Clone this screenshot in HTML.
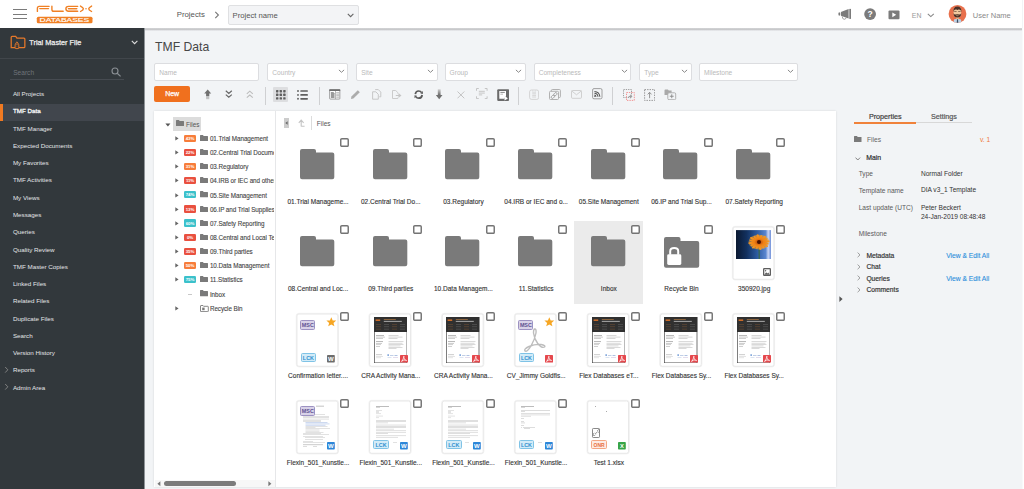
<!DOCTYPE html><html><head><meta charset="utf-8"><style>
*{margin:0;padding:0;box-sizing:border-box}
html,body{width:1024px;height:489px;overflow:hidden;background:#f2f4f6;font-family:"Liberation Sans",sans-serif}
.t{position:absolute;white-space:nowrap;line-height:1}
.r{position:absolute;display:block}
</style></head><body><div class="r" style="left:0.00px;top:0.00px;width:1024.00px;height:489.00px;background:#f2f4f6;"></div>
<div class="r" style="left:0.00px;top:0.00px;width:1022.00px;height:28.00px;background:#ffffff;z-index:2"></div>
<div class="r" style="left:0.00px;top:27.60px;width:1022.00px;height:3.60px;background:linear-gradient(#d6d7d9 0%, #c4c5c7 45%, #dcdde0 75%, #f2f4f6 100%);z-index:2"></div>
<div class="r" style="left:1022.00px;top:28.00px;width:1.00px;height:461.00px;background:#f8f9fa;z-index:3"></div>
<div class="r" style="left:1023.00px;top:0.00px;width:1.00px;height:489.00px;background:#ffffff;z-index:3"></div>
<div class="r" style="left:13.20px;top:9.00px;width:13.40px;height:1.10px;background:#7b7b7b;z-index:4"></div>
<div class="r" style="left:13.20px;top:13.50px;width:13.40px;height:1.10px;background:#7b7b7b;z-index:4"></div>
<div class="r" style="left:13.20px;top:18.00px;width:13.40px;height:1.10px;background:#7b7b7b;z-index:4"></div>
<svg class="r" style="left:0.00px;top:0.00px;z-index:4" width="100" height="28" viewBox="0 0 100 28">
<g fill="none" stroke="#f08024" stroke-width="1.4" stroke-linecap="round" stroke-linejoin="round">
<path d="M49.1 6.35 H39.2 Q37.4 6.35 37.4 8.15 V11.4"/>
<path d="M39.8 8.6 H48.5"/>
<path d="M51.9 6.2 V9.4 Q51.9 11.25 53.7 11.25 H63.2"/>
<path d="M77.7 6.35 H68.5 Q65.9 6.35 65.9 8.8 Q65.9 11.25 68.5 11.25 H77.7"/>
<path d="M68.4 8.65 H76.8"/>
<path d="M80.5 6.1 Q83.4 7.6 83.4 8.8 Q83.4 10 80.5 11.5"/>
<path d="M91.6 6.1 Q88.7 7.6 88.7 8.8 Q88.7 10 91.6 11.5"/>
</g>
<rect x="68.4" y="9.2" width="8.4" height="1.2" fill="#f08024" opacity="0.35"/>
<circle cx="86" cy="8.8" r="0.75" fill="#f08024"/>
<rect x="36.8" y="16.7" width="55.7" height="6.5" rx="1.5" fill="#f08024"/>
<text x="39.6" y="21.95" font-family="Liberation Sans" font-size="5.0" fill="#fff" textLength="49.6" lengthAdjust="spacingAndGlyphs" stroke="#fff" stroke-width="0.12">DATABASES</text>
</svg>
<div style="position:absolute;left:0;top:0;z-index:4">
<div class="t " style="left:176.70px;top:11.00px;font-size:7.8px;color:#555;">Projects</div>
<svg class="r" style="left:213.50px;top:10.50px;" width="6" height="8" viewBox="0 0 6 8"><path d="M1.3 0.8 L4.4 4 L1.3 7.2" fill="none" stroke="#777" stroke-width="1.1"/></svg>
<div class="r" style="left:228.00px;top:5.00px;width:131.00px;height:19.50px;background:#f3f4f6;border:1px solid #dfe0e2;border-radius:2px"></div>
<div class="t " style="left:232.50px;top:12.00px;font-size:7.7px;color:#555;">Project name</div>
<svg class="r" style="left:346.50px;top:12.50px;" width="8" height="5" viewBox="0 0 8 5"><path d="M0.8 0.8 L3.6 3.6 L6.4 0.8" fill="none" stroke="#666" stroke-width="1.1"/></svg>
<svg class="r" style="left:835.00px;top:6.00px;" width="18" height="16" viewBox="0 0 18 16"><ellipse cx="4.3" cy="8.1" rx="0.95" ry="1.75" fill="#7b7b7b"/><path d="M5.9 5.9 L13.6 3.1 V12.6 L5.9 9.8 Z" fill="#7b7b7b"/>
<rect x="14.3" y="2.9" width="1.7" height="10" fill="#7b7b7b"/><path d="M7.2 10.4 Q7.3 13.2 9.2 13.3 Q10.8 13.3 11.2 11.6" fill="none" stroke="#8a8a8a" stroke-width="0.8"/></svg>
<svg class="r" style="left:863.50px;top:8.00px;" width="13" height="13" viewBox="0 0 13 13"><circle cx="6.1" cy="6.1" r="5.9" fill="#7b7b7b"/><text x="6.1" y="9.2" font-family="Liberation Sans" font-weight="bold" font-size="8.5" fill="#fff" text-anchor="middle">?</text></svg>
<svg class="r" style="left:887.50px;top:9.80px;" width="12" height="10" viewBox="0 0 12 10"><rect x="0.5" y="0.4" width="11" height="8.8" rx="1" fill="#7b7b7b"/><path d="M4.3 2.4 L8.2 4.8 L4.3 7.2 Z" fill="#fff"/></svg>
<div class="t " style="left:911.80px;top:13.00px;font-size:6.9px;color:#999;">EN</div>
<svg class="r" style="left:926.50px;top:12.50px;" width="8" height="5" viewBox="0 0 8 5"><path d="M0.8 0.8 L3.8 3.6 L6.8 0.8" fill="none" stroke="#888" stroke-width="1.1"/></svg>
<svg class="r" style="left:947.50px;top:5.00px;" width="19" height="19" viewBox="0 0 19 19"><defs><clipPath id="av"><circle cx="9.5" cy="8.9" r="8.9"/></clipPath></defs>
<circle cx="9.5" cy="8.9" r="8.9" fill="#e8704c"/>
<g clip-path="url(#av)">
<path d="M5.2 19 L6 14.5 Q9.5 13.2 13 14.5 L13.8 19 Z" fill="#bcd2e6"/>
<path d="M9 14 H10 L10.3 19 H8.7 Z" fill="#3d4e62"/>
<rect x="8.2" y="11.5" width="2.6" height="2.8" fill="#e0b48c"/>
<path d="M5.6 6 Q5.6 1.8 9.4 1.8 Q13.2 1.8 13.2 6 V9 Q13.2 12.4 9.4 12.4 Q5.6 12.4 5.6 9 Z" fill="#f0c9a0"/>
<path d="M5.4 7.2 Q5 1.6 9.4 1.6 Q13.8 1.6 13.4 7.2 L12.8 5.4 Q12 4.4 10.4 4.6 Q9.4 5.3 8.4 4.6 Q6.8 4.4 6 5.4 Z" fill="#4b3027"/>
<path d="M6.2 6.5 H8.6 M10.2 6.5 H12.6" stroke="#6a4a3a" stroke-width="0.7"/>
<path d="M5.5 8 Q5.4 12.6 9.4 12.6 Q13.4 12.6 13.3 8 Q12.6 9.6 11.6 9.5 Q9.4 8.8 7.2 9.5 Q6.2 9.6 5.5 8 Z" fill="#4b3027"/>
<path d="M8.3 10.4 Q9.4 11 10.5 10.4" stroke="#e9c39b" stroke-width="0.6" fill="none"/>
</g></svg>
<div class="t " style="left:972.80px;top:12.00px;font-size:7.5px;color:#8a8a8a;">User Name</div>
</div>
<div class="r" style="left:0.00px;top:28.00px;width:144.30px;height:461.00px;background:#32383c;z-index:3"></div>
<div class="r" style="left:144.00px;top:28.00px;width:1.00px;height:461.00px;background:#8e9397;z-index:3"></div>
<div style="position:absolute;left:0;top:0;z-index:4">
<svg class="r" style="left:9.00px;top:34.00px;" width="18" height="17" viewBox="0 0 18 17"><path d="M2.2 13.65 V3.3 Q2.2 2.4 3.1 2.4 H6.7 L7.9 4 H14.9 Q15.85 4 15.85 4.9 V12.75 Q15.85 13.65 14.9 13.65 Z" fill="none" stroke="#e8792a" stroke-width="1.25"/>
<rect x="6.1" y="10" width="3.7" height="4.6" rx="0.7" fill="#32383c" stroke="#e8792a" stroke-width="0.95"/>
<path d="M6.9 10 V8.9 Q7.95 6.9 9 8.9 V10" fill="#32383c" stroke="#e8792a" stroke-width="0.95"/>
<path d="M7.95 11.4 V13" stroke="#a85a22" stroke-width="0.6"/></svg>
<div class="t " style="left:29.30px;top:39.00px;font-size:7.3px;color:#eeeeee;-webkit-text-stroke:0.25px #eeeeee">Trial Master File</div>
<svg class="r" style="left:130.50px;top:40.20px;" width="8" height="5" viewBox="0 0 8 5"><path d="M0.8 0.8 L3.6 3.6 L6.4 0.8" fill="none" stroke="#ddd" stroke-width="1.1"/></svg>
<div class="r" style="left:0.00px;top:58.00px;width:144.30px;height:1.00px;background:#41464b;"></div>
<div class="t " style="left:13.20px;top:70.00px;font-size:6.6px;color:#6f7479;">Search</div>
<svg class="r" style="left:110.50px;top:66.50px;" width="11" height="10" viewBox="0 0 11 10"><circle cx="4" cy="4" r="3" fill="none" stroke="#8a8f94" stroke-width="1.1"/><path d="M6.2 6.2 L9.6 9.4" stroke="#8a8f94" stroke-width="1.2"/></svg>
<div class="r" style="left:10.30px;top:79.20px;width:114.20px;height:0.80px;background:#464b51;"></div>
<div class="r" style="left:0.00px;top:104.00px;width:144.30px;height:16.60px;background:#41464d;"></div>
<div class="r" style="left:0.00px;top:104.00px;width:2.50px;height:16.60px;background:#f07a22;"></div>
<div class="t " style="left:12.90px;top:91.00px;font-size:6.25px;color:#e4e6e8;">All Projects</div>
<div class="t " style="left:12.90px;top:108.00px;font-size:6.25px;color:#f6f7f8;-webkit-text-stroke:0.3px #f4f5f6">TMF Data</div>
<div class="t " style="left:12.90px;top:126.00px;font-size:6.25px;color:#e4e6e8;">TMF Manager</div>
<div class="t " style="left:12.90px;top:143.00px;font-size:6.25px;color:#e4e6e8;">Expected Documents</div>
<div class="t " style="left:12.90px;top:160.00px;font-size:6.25px;color:#e4e6e8;">My Favorites</div>
<div class="t " style="left:12.90px;top:177.00px;font-size:6.25px;color:#e4e6e8;">TMF Activities</div>
<div class="t " style="left:12.90px;top:195.00px;font-size:6.25px;color:#e4e6e8;">My Views</div>
<div class="t " style="left:12.90px;top:212.00px;font-size:6.25px;color:#e4e6e8;">Messages</div>
<div class="t " style="left:12.90px;top:229.00px;font-size:6.25px;color:#e4e6e8;">Queries</div>
<div class="t " style="left:12.90px;top:247.00px;font-size:6.25px;color:#e4e6e8;">Quality Review</div>
<div class="t " style="left:12.90px;top:264.00px;font-size:6.25px;color:#e4e6e8;">TMF Master Copies</div>
<div class="t " style="left:12.90px;top:281.00px;font-size:6.25px;color:#e4e6e8;">Linked Files</div>
<div class="t " style="left:12.90px;top:298.00px;font-size:6.25px;color:#e4e6e8;">Related Files</div>
<div class="t " style="left:12.90px;top:316.00px;font-size:6.25px;color:#e4e6e8;">Duplicate Files</div>
<div class="t " style="left:12.90px;top:333.00px;font-size:6.25px;color:#e4e6e8;">Search</div>
<div class="t " style="left:12.90px;top:350.00px;font-size:6.25px;color:#e4e6e8;">Version History</div>
<div class="t " style="left:12.90px;top:367.00px;font-size:6.25px;color:#e4e6e8;">Reports</div>
<svg class="r" style="left:4.00px;top:365.98px;" width="6" height="8" viewBox="0 0 6 8"><path d="M1.2 1 L3.8 3.8 L1.2 6.6" fill="none" stroke="#888" stroke-width="0.9"/></svg>
<div class="t " style="left:12.90px;top:385.00px;font-size:6.25px;color:#e4e6e8;">Admin Area</div>
<svg class="r" style="left:4.00px;top:383.26px;" width="6" height="8" viewBox="0 0 6 8"><path d="M1.2 1 L3.8 3.8 L1.2 6.6" fill="none" stroke="#888" stroke-width="0.9"/></svg>
</div>
<div class="t " style="left:155.10px;top:41.00px;font-size:12.2px;color:#474747;">TMF Data</div>
<div class="r" style="left:154.30px;top:63.20px;width:105.00px;height:17.40px;background:#ffffff;border:1px solid #dcdde0;border-radius:2px"></div>
<div class="t " style="left:159.30px;top:70.00px;font-size:6.6px;color:#b9b9b9;">Name</div>
<div class="r" style="left:267.30px;top:63.20px;width:81.10px;height:17.40px;background:#ffffff;border:1px solid #dcdde0;border-radius:2px"></div>
<div class="t " style="left:272.30px;top:70.00px;font-size:6.6px;color:#b9b9b9;">Country</div>
<svg class="r" style="left:337.90px;top:68.70px;" width="7" height="5" viewBox="0 0 7 5"><path d="M0.9 0.9 L3.5 3.3 L6.1 0.9" fill="none" stroke="#888" stroke-width="1"/></svg>
<div class="r" style="left:356.20px;top:63.20px;width:81.40px;height:17.40px;background:#ffffff;border:1px solid #dcdde0;border-radius:2px"></div>
<div class="t " style="left:361.20px;top:70.00px;font-size:6.6px;color:#b9b9b9;">Site</div>
<svg class="r" style="left:427.10px;top:68.70px;" width="7" height="5" viewBox="0 0 7 5"><path d="M0.9 0.9 L3.5 3.3 L6.1 0.9" fill="none" stroke="#888" stroke-width="1"/></svg>
<div class="r" style="left:444.60px;top:63.20px;width:81.20px;height:17.40px;background:#ffffff;border:1px solid #dcdde0;border-radius:2px"></div>
<div class="t " style="left:449.60px;top:70.00px;font-size:6.6px;color:#b9b9b9;">Group</div>
<svg class="r" style="left:515.30px;top:68.70px;" width="7" height="5" viewBox="0 0 7 5"><path d="M0.9 0.9 L3.5 3.3 L6.1 0.9" fill="none" stroke="#888" stroke-width="1"/></svg>
<div class="r" style="left:533.70px;top:63.20px;width:97.40px;height:17.40px;background:#ffffff;border:1px solid #dcdde0;border-radius:2px"></div>
<div class="t " style="left:538.70px;top:70.00px;font-size:6.6px;color:#b9b9b9;">Completeness</div>
<svg class="r" style="left:620.60px;top:68.70px;" width="7" height="5" viewBox="0 0 7 5"><path d="M0.9 0.9 L3.5 3.3 L6.1 0.9" fill="none" stroke="#888" stroke-width="1"/></svg>
<div class="r" style="left:639.30px;top:63.20px;width:52.60px;height:17.40px;background:#ffffff;border:1px solid #dcdde0;border-radius:2px"></div>
<div class="t " style="left:644.30px;top:70.00px;font-size:6.6px;color:#b9b9b9;">Type</div>
<svg class="r" style="left:681.40px;top:68.70px;" width="7" height="5" viewBox="0 0 7 5"><path d="M0.9 0.9 L3.5 3.3 L6.1 0.9" fill="none" stroke="#888" stroke-width="1"/></svg>
<div class="r" style="left:699.00px;top:63.20px;width:98.50px;height:17.40px;background:#ffffff;border:1px solid #dcdde0;border-radius:2px"></div>
<div class="t " style="left:704.00px;top:70.00px;font-size:6.6px;color:#b9b9b9;">Milestone</div>
<svg class="r" style="left:787.00px;top:68.70px;" width="7" height="5" viewBox="0 0 7 5"><path d="M0.9 0.9 L3.5 3.3 L6.1 0.9" fill="none" stroke="#888" stroke-width="1"/></svg>
<div class="r" style="left:154.30px;top:85.90px;width:35.70px;height:16.50px;background:#f0701e;border-radius:2px"></div>
<div class="t " style="left:112.15px;width:120px;text-align:center;top:90.00px;font-size:7.0px;color:#ffffff;-webkit-text-stroke:0.25px #fff">New</div>
<div class="r" style="left:264.90px;top:86.50px;width:1.00px;height:18.00px;background:#cfd0d2;"></div>
<div class="r" style="left:319.00px;top:86.50px;width:1.00px;height:18.00px;background:#cfd0d2;"></div>
<div class="r" style="left:518.10px;top:86.50px;width:1.00px;height:18.00px;background:#cfd0d2;"></div>
<div class="r" style="left:612.30px;top:86.50px;width:1.00px;height:18.00px;background:#cfd0d2;"></div>
<div class="r" style="left:273.30px;top:86.90px;width:14.70px;height:14.70px;background:#dddee0;border-radius:1px"></div>
<div style="position:absolute;left:0;top:0">
<svg class="r" style="left:203.50px;top:88.50px;" width="8" height="11" viewBox="0 0 8 11"><path d="M3.7 0.6 L7.2 4.6 H5.3 V7 H2.1 V4.6 H0.2 Z" fill="#707070"/><rect x="2.1" y="7.4" width="3.2" height="1.2" fill="#a0a0a0"/><rect x="2.1" y="9" width="3.2" height="1.2" fill="#c4c4c4"/></svg>
<svg class="r" style="left:224.50px;top:90.00px;" width="8" height="9" viewBox="0 0 8 9"><path d="M0.8 0.8 L3.8 3.4 L6.8 0.8 M0.8 4.6 L3.8 7.2 L6.8 4.6" fill="none" stroke="#666" stroke-width="1.2"/></svg>
<svg class="r" style="left:245.80px;top:89.50px;" width="8" height="9" viewBox="0 0 8 9"><path d="M0.8 3.8 L3.8 1.2 L6.8 3.8 M0.8 7.6 L3.8 5 L6.8 7.6" fill="none" stroke="#bdbdbd" stroke-width="1.1"/></svg>
<svg class="r" style="left:275.90px;top:89.80px;" width="10" height="10" viewBox="0 0 10 10"><rect x="0.0" y="0.0" width="2.4" height="2.4" rx="0.6" fill="#606060"/><rect x="3.6" y="0.0" width="2.4" height="2.4" rx="0.6" fill="#606060"/><rect x="7.2" y="0.0" width="2.4" height="2.4" rx="0.6" fill="#606060"/><rect x="0.0" y="3.6" width="2.4" height="2.4" rx="0.6" fill="#606060"/><rect x="3.6" y="3.6" width="2.4" height="2.4" rx="0.6" fill="#606060"/><rect x="7.2" y="3.6" width="2.4" height="2.4" rx="0.6" fill="#606060"/><rect x="0.0" y="7.2" width="2.4" height="2.4" rx="0.6" fill="#606060"/><rect x="3.6" y="7.2" width="2.4" height="2.4" rx="0.6" fill="#606060"/><rect x="7.2" y="7.2" width="2.4" height="2.4" rx="0.6" fill="#606060"/></svg>
<svg class="r" style="left:297.10px;top:89.60px;" width="12" height="10" viewBox="0 0 12 10"><circle cx="1" cy="1.0" r="0.95" fill="#606060"/><rect x="3.3" y="0.15" width="7.6" height="1.7" rx="0.6" fill="#606060"/><circle cx="1" cy="4.9" r="0.95" fill="#606060"/><rect x="3.3" y="4.05" width="7.6" height="1.7" rx="0.6" fill="#606060"/><circle cx="1" cy="8.8" r="0.95" fill="#606060"/><rect x="3.3" y="7.95" width="7.6" height="1.7" rx="0.6" fill="#606060"/></svg>
<svg class="r" style="left:328.80px;top:89.30px;" width="12" height="11" viewBox="0 0 12 11"><rect x="0.65" y="0.65" width="10.2" height="9.4" rx="0.6" fill="#fff" stroke="#7a7a7a" stroke-width="0.7"/><rect x="0.3" y="0.3" width="10.9" height="1.7" fill="#6e6e6e"/><path d="M6.5 2 V9.9" stroke="#8a8a8a" stroke-width="0.6"/><path d="M1.9 3.1 H4.4 L5.5 4.2 V8.9 H1.9 Z" fill="#9a9a9a"/><path d="M7.2 3.7 H10.2 M7.2 5.2 H10.2 M7.2 6.7 H10.2 M7.2 8.2 H10.2" stroke="#9a9a9a" stroke-width="0.7"/></svg>
<svg class="r" style="left:349.50px;top:89.30px;" width="11" height="11" viewBox="0 0 11 11"><path d="M1 10 L1.4 7.6 L7.8 1.2 L9.8 3.2 L3.4 9.6 Z" fill="#acacac"/></svg>
<svg class="r" style="left:371.50px;top:89.30px;" width="10" height="11" viewBox="0 0 10 11"><path d="M3.2 0.6 H6.3 L8.8 3.1 V7.8 H7.2" fill="none" stroke="#c2c2c2" stroke-width="0.9"/><path d="M0.6 2.8 H3.8 L6.3 5.3 V10.2 H0.6 Z" fill="none" stroke="#c2c2c2" stroke-width="0.9"/></svg>
<svg class="r" style="left:391.80px;top:90.00px;" width="11" height="10" viewBox="0 0 11 10"><path d="M5.8 3.6 V2.6 L3.7 0.5 H0.5 V8.5 H5.8 V7.6" fill="none" stroke="#c6c6c6" stroke-width="0.9"/><path d="M3.8 5.5 H7.8 M6.4 3.8 L8.6 5.5 L6.4 7.2" fill="none" stroke="#c6c6c6" stroke-width="1.1"/></svg>
<svg class="r" style="left:414.00px;top:89.70px;" width="10" height="10" viewBox="0 0 10 10"><path d="M1.3 4.2 Q1.8 1 4.6 1 Q6.6 1 7.6 2.6" fill="none" stroke="#5a5a5a" stroke-width="1.7"/><path d="M8.2 5 Q7.7 8.2 4.8 8.2 Q2.8 8.2 1.8 6.6" fill="none" stroke="#5a5a5a" stroke-width="1.7"/><path d="M6.4 3.4 L8.9 0.9 V4 Z" fill="#5a5a5a"/><path d="M3 5.8 L0.5 8.3 V5.2 Z" fill="#5a5a5a"/></svg>
<svg class="r" style="left:435.80px;top:88.80px;" width="7" height="11" viewBox="0 0 7 11"><defs><linearGradient id="dg" x1="0" y1="0" x2="0" y2="1"><stop offset="0" stop-color="#d0d0d0"/><stop offset="0.55" stop-color="#707070"/></linearGradient></defs><path d="M1.8 0.3 H4.6 V6 H6.5 L3.2 10.2 L-0.1 6 H1.8 Z" fill="url(#dg)"/></svg>
<svg class="r" style="left:456.50px;top:90.60px;" width="8" height="8" viewBox="0 0 8 8"><path d="M0.5 0.5 L7.3 7.3 M7.3 0.5 L0.5 7.3" stroke="#bdbdbd" stroke-width="0.9"/></svg>
<svg class="r" style="left:475.50px;top:88.20px;" width="12" height="11" viewBox="0 0 12 11"><path d="M0.5 2.8 V0.5 H2.8 M8.8 0.5 H11.1 V2.8 M11.1 8.3 V10.6 H8.8 M2.8 10.6 H0.5 V8.3" fill="none" stroke="#c0c0c0" stroke-width="0.9"/><path d="M2.8 3.3 H8.8 M2.8 5.1 H8.8 M2.8 6.9 H6.2" stroke="#c6c6c6" stroke-width="1"/></svg>
<svg class="r" style="left:496.60px;top:88.50px;" width="12.5" height="12.5" viewBox="0 0 12.5 12.5"><rect x="0.2" y="0.2" width="12" height="11.8" rx="1.2" fill="#6b6b6b"/><path d="M2.3 2 H9 V6.5 L7.2 9.8 H2.3 Z" fill="#fff"/><path d="M3.4 3.4 H7.8" stroke="#6b6b6b" stroke-width="0.8"/><path d="M3.4 5.2 H6" stroke="#aaa" stroke-width="0.8"/><path d="M7.5 6.6 L10.8 9.4 L7.5 11.6 Z" fill="#fff"/></svg>
<svg class="r" style="left:528.70px;top:89.00px;" width="10.5" height="11" viewBox="0 0 10.5 11"><rect x="0.6" y="1" width="9" height="9.4" rx="1.8" fill="none" stroke="#d0d0d0" stroke-width="0.9"/><path d="M3.2 3.2 H7 M3.2 4.8 H7 M3.2 6.4 H7 M3.2 8 H7" stroke="#d4d4d4" stroke-width="0.9"/><path d="M3.6 1 V2.4 M6.6 1 V2.4" stroke="#d8d8d8" stroke-width="0.6"/></svg>
<svg class="r" style="left:549.00px;top:88.90px;" width="12" height="11" viewBox="0 0 12 11"><rect x="2.4" y="0.5" width="9" height="8" rx="1" fill="none" stroke="#a9a9a9" stroke-width="0.9"/><rect x="0.5" y="2.3" width="9" height="8.2" rx="1" fill="#f2f4f6" stroke="#a9a9a9" stroke-width="0.9"/><g fill="none" stroke="#999" stroke-width="0.85"><rect x="5.2" y="3.4" width="2.4" height="3.6" rx="1.2" transform="rotate(45 6.4 5.2)"/><rect x="2.6" y="6" width="2.4" height="3.6" rx="1.2" transform="rotate(45 3.8 7.8)"/></g></svg>
<svg class="r" style="left:571.00px;top:90.10px;" width="11" height="9" viewBox="0 0 11 9"><rect x="0.5" y="0.5" width="10" height="7.8" rx="1" fill="none" stroke="#cccccc" stroke-width="0.9"/><path d="M0.8 1 L5.5 4.8 L10.2 1" fill="none" stroke="#cccccc" stroke-width="0.9"/></svg>
<svg class="r" style="left:591.70px;top:88.20px;" width="11" height="11.5" viewBox="0 0 11 11.5"><rect x="0.6" y="0.6" width="9.4" height="10.2" rx="1.4" fill="none" stroke="#8a8a8a" stroke-width="0.8"/><path d="M2.4 3.4 Q7.4 3.6 7.9 8.8 M2.4 5.3 Q5.6 5.5 6 8.8 M2.4 7.1 Q3.8 7.2 4 8.8" fill="none" stroke="#555" stroke-width="1.05"/><circle cx="2.9" cy="8.3" r="0.7" fill="#555"/></svg>
<svg class="r" style="left:623.00px;top:88.60px;" width="12" height="12" viewBox="0 0 12 12"><rect x="0.5" y="0.5" width="8" height="8" fill="none" stroke="#8a8a8a" stroke-width="0.8" stroke-dasharray="1.3 1"/><rect x="3.5" y="3.5" width="7.8" height="7.9" fill="none" stroke="#f08a8a" stroke-width="0.9" stroke-dasharray="1.4 1"/><path d="M7.4 5.7 V9.3 M5.6 7.5 H9.2" stroke="#a0a0a0" stroke-width="1"/></svg>
<svg class="r" style="left:643.80px;top:88.60px;" width="11.5" height="12" viewBox="0 0 11.5 12"><rect x="0.6" y="0.6" width="10" height="10.8" fill="none" stroke="#8a8a8a" stroke-width="0.9" stroke-dasharray="1.4 1.1"/><path d="M5.6 9.2 V3.4 M3.7 5.4 L5.6 3.3 L7.5 5.4" fill="none" stroke="#8a8a8a" stroke-width="0.9"/></svg>
<svg class="r" style="left:664.00px;top:88.90px;" width="12.5" height="11.5" viewBox="0 0 12.5 11.5"><path d="M0.5 1.4 Q0.5 0.5 1.4 0.5 H3.8 L4.8 1.6 H7.6 V6 H0.5 Z" fill="#a9a9a9"/><rect x="3.8" y="3.8" width="7.9" height="6.9" rx="1.2" fill="#f2f4f6" stroke="#aaa" stroke-width="0.9"/><path d="M7.75 5.3 V9.2 M5.8 7.25 H9.7" stroke="#888" stroke-width="0.9"/></svg>
</div>
<div class="r" style="left:153.90px;top:110.60px;width:682.00px;height:376.40px;background:#ffffff;box-shadow:0 0 2px rgba(0,0,0,0.12)"></div>
<div class="r" style="left:275.10px;top:110.60px;width:1.00px;height:376.40px;background:#e6e7e9;"></div>
<div style="position:absolute;left:0;top:0">
<div class="r" style="left:172.50px;top:117.20px;width:28.20px;height:13.50px;background:#dcdcdc;"></div>
<svg class="r" style="left:165.00px;top:123.30px;" width="6" height="4" viewBox="0 0 6 4"><path d="M0.4 0.4 H5.4 L2.9 3.4 Z" fill="#555"/></svg>
<svg class="r" style="left:176.10px;top:120.30px;" width="8" height="6.2" viewBox="0 0 8 6.2"><path d="M0 0.6 Q0 0 0.6 0 H3 L3.6 0.9 H7.5 Q8 0.9 8 1.4 V5.7 Q8 6.2 7.5 6.2 H0.5 Q0 6.2 0 5.7 Z" fill="#7a7a7a"/></svg>
<div class="t " style="left:186.00px;top:122.00px;font-size:6.4px;color:#555;">Files</div>
<div style="position:absolute;left:0;top:0;width:274px;height:489px;overflow:hidden">
<svg class="r" style="left:174.60px;top:135.90px;" width="4" height="5" viewBox="0 0 4 5"><path d="M0.3 0.2 L3.6 2.4 L0.3 4.6 Z" fill="#666"/></svg>
<div class="r" style="left:184.00px;top:134.50px;width:12.00px;height:7.40px;background:#f77d3a;border-radius:1.3px"></div>
<div class="t " style="left:130.00px;width:120px;text-align:center;top:137.00px;font-size:4.4px;color:#fff;font-weight:700;letter-spacing:-0.15px">43%</div>
<svg class="r" style="left:200.10px;top:134.80px;" width="8" height="6.2" viewBox="0 0 8 6.2"><path d="M0 0.6 Q0 0 0.6 0 H3 L3.6 0.9 H7.5 Q8 0.9 8 1.4 V5.7 Q8 6.2 7.5 6.2 H0.5 Q0 6.2 0 5.7 Z" fill="#7a7a7a"/></svg>
<div class="t " style="left:209.90px;top:136.00px;font-size:6.3px;color:#444444;letter-spacing:-0.06px;-webkit-text-stroke:0.1px #444">01.Trial Management</div>
<svg class="r" style="left:174.60px;top:150.05px;" width="4" height="5" viewBox="0 0 4 5"><path d="M0.3 0.2 L3.6 2.4 L0.3 4.6 Z" fill="#666"/></svg>
<div class="r" style="left:184.00px;top:148.65px;width:12.00px;height:7.40px;background:#e9503f;border-radius:1.3px"></div>
<div class="t " style="left:130.00px;width:120px;text-align:center;top:151.00px;font-size:4.4px;color:#fff;font-weight:700;letter-spacing:-0.15px">22%</div>
<svg class="r" style="left:200.10px;top:148.95px;" width="8" height="6.2" viewBox="0 0 8 6.2"><path d="M0 0.6 Q0 0 0.6 0 H3 L3.6 0.9 H7.5 Q8 0.9 8 1.4 V5.7 Q8 6.2 7.5 6.2 H0.5 Q0 6.2 0 5.7 Z" fill="#7a7a7a"/></svg>
<div class="t " style="left:209.90px;top:150.00px;font-size:6.3px;color:#444444;letter-spacing:-0.06px;-webkit-text-stroke:0.1px #444">02.Central Trial Documents</div>
<svg class="r" style="left:174.60px;top:164.20px;" width="4" height="5" viewBox="0 0 4 5"><path d="M0.3 0.2 L3.6 2.4 L0.3 4.6 Z" fill="#666"/></svg>
<div class="r" style="left:184.00px;top:162.80px;width:12.00px;height:7.40px;background:#f77d3a;border-radius:1.3px"></div>
<div class="t " style="left:130.00px;width:120px;text-align:center;top:165.00px;font-size:4.4px;color:#fff;font-weight:700;letter-spacing:-0.15px">31%</div>
<svg class="r" style="left:200.10px;top:163.10px;" width="8" height="6.2" viewBox="0 0 8 6.2"><path d="M0 0.6 Q0 0 0.6 0 H3 L3.6 0.9 H7.5 Q8 0.9 8 1.4 V5.7 Q8 6.2 7.5 6.2 H0.5 Q0 6.2 0 5.7 Z" fill="#7a7a7a"/></svg>
<div class="t " style="left:209.90px;top:164.00px;font-size:6.3px;color:#444444;letter-spacing:-0.06px;-webkit-text-stroke:0.1px #444">03.Regulatory</div>
<svg class="r" style="left:174.60px;top:178.35px;" width="4" height="5" viewBox="0 0 4 5"><path d="M0.3 0.2 L3.6 2.4 L0.3 4.6 Z" fill="#666"/></svg>
<div class="r" style="left:184.00px;top:176.95px;width:12.00px;height:7.40px;background:#e9503f;border-radius:1.3px"></div>
<div class="t " style="left:130.00px;width:120px;text-align:center;top:179.00px;font-size:4.4px;color:#fff;font-weight:700;letter-spacing:-0.15px">11%</div>
<svg class="r" style="left:200.10px;top:177.25px;" width="8" height="6.2" viewBox="0 0 8 6.2"><path d="M0 0.6 Q0 0 0.6 0 H3 L3.6 0.9 H7.5 Q8 0.9 8 1.4 V5.7 Q8 6.2 7.5 6.2 H0.5 Q0 6.2 0 5.7 Z" fill="#7a7a7a"/></svg>
<div class="t " style="left:209.90px;top:178.00px;font-size:6.3px;color:#444444;letter-spacing:-0.06px;-webkit-text-stroke:0.1px #444">04.IRB or IEC and other Approvals</div>
<svg class="r" style="left:174.60px;top:192.50px;" width="4" height="5" viewBox="0 0 4 5"><path d="M0.3 0.2 L3.6 2.4 L0.3 4.6 Z" fill="#666"/></svg>
<div class="r" style="left:184.00px;top:191.10px;width:12.00px;height:7.40px;background:#3bc1cb;border-radius:1.3px"></div>
<div class="t " style="left:130.00px;width:120px;text-align:center;top:193.00px;font-size:4.4px;color:#fff;font-weight:700;letter-spacing:-0.15px">74%</div>
<svg class="r" style="left:200.10px;top:191.40px;" width="8" height="6.2" viewBox="0 0 8 6.2"><path d="M0 0.6 Q0 0 0.6 0 H3 L3.6 0.9 H7.5 Q8 0.9 8 1.4 V5.7 Q8 6.2 7.5 6.2 H0.5 Q0 6.2 0 5.7 Z" fill="#7a7a7a"/></svg>
<div class="t " style="left:209.90px;top:193.00px;font-size:6.3px;color:#444444;letter-spacing:-0.06px;-webkit-text-stroke:0.1px #444">05.Site Management</div>
<svg class="r" style="left:174.60px;top:206.65px;" width="4" height="5" viewBox="0 0 4 5"><path d="M0.3 0.2 L3.6 2.4 L0.3 4.6 Z" fill="#666"/></svg>
<div class="r" style="left:184.00px;top:205.25px;width:12.00px;height:7.40px;background:#e9503f;border-radius:1.3px"></div>
<div class="t " style="left:130.00px;width:120px;text-align:center;top:208.00px;font-size:4.4px;color:#fff;font-weight:700;letter-spacing:-0.15px">13%</div>
<svg class="r" style="left:200.10px;top:205.55px;" width="8" height="6.2" viewBox="0 0 8 6.2"><path d="M0 0.6 Q0 0 0.6 0 H3 L3.6 0.9 H7.5 Q8 0.9 8 1.4 V5.7 Q8 6.2 7.5 6.2 H0.5 Q0 6.2 0 5.7 Z" fill="#7a7a7a"/></svg>
<div class="t " style="left:209.90px;top:207.00px;font-size:6.3px;color:#444444;letter-spacing:-0.06px;-webkit-text-stroke:0.1px #444">06.IP and Trial Supplies</div>
<svg class="r" style="left:174.60px;top:220.80px;" width="4" height="5" viewBox="0 0 4 5"><path d="M0.3 0.2 L3.6 2.4 L0.3 4.6 Z" fill="#666"/></svg>
<div class="r" style="left:184.00px;top:219.40px;width:12.00px;height:7.40px;background:#3bc1cb;border-radius:1.3px"></div>
<div class="t " style="left:130.00px;width:120px;text-align:center;top:222.00px;font-size:4.4px;color:#fff;font-weight:700;letter-spacing:-0.15px">60%</div>
<svg class="r" style="left:200.10px;top:219.70px;" width="8" height="6.2" viewBox="0 0 8 6.2"><path d="M0 0.6 Q0 0 0.6 0 H3 L3.6 0.9 H7.5 Q8 0.9 8 1.4 V5.7 Q8 6.2 7.5 6.2 H0.5 Q0 6.2 0 5.7 Z" fill="#7a7a7a"/></svg>
<div class="t " style="left:209.90px;top:221.00px;font-size:6.3px;color:#444444;letter-spacing:-0.06px;-webkit-text-stroke:0.1px #444">07.Safety Reporting</div>
<svg class="r" style="left:174.60px;top:234.95px;" width="4" height="5" viewBox="0 0 4 5"><path d="M0.3 0.2 L3.6 2.4 L0.3 4.6 Z" fill="#666"/></svg>
<div class="r" style="left:184.00px;top:233.55px;width:12.00px;height:7.40px;background:#e9503f;border-radius:1.3px"></div>
<div class="t " style="left:130.00px;width:120px;text-align:center;top:236.00px;font-size:4.4px;color:#fff;font-weight:700;letter-spacing:-0.15px">0%</div>
<svg class="r" style="left:200.10px;top:233.85px;" width="8" height="6.2" viewBox="0 0 8 6.2"><path d="M0 0.6 Q0 0 0.6 0 H3 L3.6 0.9 H7.5 Q8 0.9 8 1.4 V5.7 Q8 6.2 7.5 6.2 H0.5 Q0 6.2 0 5.7 Z" fill="#7a7a7a"/></svg>
<div class="t " style="left:209.90px;top:235.00px;font-size:6.3px;color:#444444;letter-spacing:-0.06px;-webkit-text-stroke:0.1px #444">08.Central and Local Testing</div>
<svg class="r" style="left:174.60px;top:249.10px;" width="4" height="5" viewBox="0 0 4 5"><path d="M0.3 0.2 L3.6 2.4 L0.3 4.6 Z" fill="#666"/></svg>
<div class="r" style="left:184.00px;top:247.70px;width:12.00px;height:7.40px;background:#e9503f;border-radius:1.3px"></div>
<div class="t " style="left:130.00px;width:120px;text-align:center;top:250.00px;font-size:4.4px;color:#fff;font-weight:700;letter-spacing:-0.15px">35%</div>
<svg class="r" style="left:200.10px;top:248.00px;" width="8" height="6.2" viewBox="0 0 8 6.2"><path d="M0 0.6 Q0 0 0.6 0 H3 L3.6 0.9 H7.5 Q8 0.9 8 1.4 V5.7 Q8 6.2 7.5 6.2 H0.5 Q0 6.2 0 5.7 Z" fill="#7a7a7a"/></svg>
<div class="t " style="left:209.90px;top:249.00px;font-size:6.3px;color:#444444;letter-spacing:-0.06px;-webkit-text-stroke:0.1px #444">09.Third parties</div>
<svg class="r" style="left:174.60px;top:263.25px;" width="4" height="5" viewBox="0 0 4 5"><path d="M0.3 0.2 L3.6 2.4 L0.3 4.6 Z" fill="#666"/></svg>
<div class="r" style="left:184.00px;top:261.85px;width:12.00px;height:7.40px;background:#f77d3a;border-radius:1.3px"></div>
<div class="t " style="left:130.00px;width:120px;text-align:center;top:264.00px;font-size:4.4px;color:#fff;font-weight:700;letter-spacing:-0.15px">50%</div>
<svg class="r" style="left:200.10px;top:262.15px;" width="8" height="6.2" viewBox="0 0 8 6.2"><path d="M0 0.6 Q0 0 0.6 0 H3 L3.6 0.9 H7.5 Q8 0.9 8 1.4 V5.7 Q8 6.2 7.5 6.2 H0.5 Q0 6.2 0 5.7 Z" fill="#7a7a7a"/></svg>
<div class="t " style="left:209.90px;top:263.00px;font-size:6.3px;color:#444444;letter-spacing:-0.06px;-webkit-text-stroke:0.1px #444">10.Data Management</div>
<svg class="r" style="left:174.60px;top:277.40px;" width="4" height="5" viewBox="0 0 4 5"><path d="M0.3 0.2 L3.6 2.4 L0.3 4.6 Z" fill="#666"/></svg>
<div class="r" style="left:184.00px;top:276.00px;width:12.00px;height:7.40px;background:#3bc1cb;border-radius:1.3px"></div>
<div class="t " style="left:130.00px;width:120px;text-align:center;top:278.00px;font-size:4.4px;color:#fff;font-weight:700;letter-spacing:-0.15px">75%</div>
<svg class="r" style="left:200.10px;top:276.30px;" width="8" height="6.2" viewBox="0 0 8 6.2"><path d="M0 0.6 Q0 0 0.6 0 H3 L3.6 0.9 H7.5 Q8 0.9 8 1.4 V5.7 Q8 6.2 7.5 6.2 H0.5 Q0 6.2 0 5.7 Z" fill="#7a7a7a"/></svg>
<div class="t " style="left:209.90px;top:277.00px;font-size:6.3px;color:#444444;letter-spacing:-0.06px;-webkit-text-stroke:0.1px #444">11.Statistics</div>
<div class="r" style="left:187.60px;top:293.65px;width:4.30px;height:0.80px;background:#c8c8c8;"></div>
<svg class="r" style="left:200.10px;top:290.45px;" width="8" height="6.2" viewBox="0 0 8 6.2"><path d="M0 0.6 Q0 0 0.6 0 H3 L3.6 0.9 H7.5 Q8 0.9 8 1.4 V5.7 Q8 6.2 7.5 6.2 H0.5 Q0 6.2 0 5.7 Z" fill="#7a7a7a"/></svg>
<div class="t " style="left:209.90px;top:292.00px;font-size:6.3px;color:#444444;letter-spacing:-0.06px;-webkit-text-stroke:0.1px #444">Inbox</div>
<svg class="r" style="left:174.60px;top:305.70px;" width="4" height="5" viewBox="0 0 4 5"><path d="M0.3 0.2 L3.6 2.4 L0.3 4.6 Z" fill="#666"/></svg>
<svg class="r" style="left:199.80px;top:304.70px;" width="9" height="7" viewBox="0 0 9 7"><path d="M0.5 1 Q0.5 0.5 1 0.5 H3 L3.6 1.3 H7.8 Q8.3 1.3 8.3 1.8 V6.2 Q8.3 6.6 7.8 6.6 H1 Q0.5 6.6 0.5 6.2 Z" fill="none" stroke="#7a7a7a" stroke-width="0.9"/><rect x="2.2" y="2.6" width="2.4" height="2.6" fill="#7a7a7a"/></svg>
<div class="t " style="left:209.90px;top:306.00px;font-size:6.3px;color:#444444;letter-spacing:-0.06px;-webkit-text-stroke:0.1px #444">Recycle Bin</div>
</div>
<div class="r" style="left:154.50px;top:479.50px;width:120.50px;height:7.50px;background:#f7f7f7;"></div>
<svg class="r" style="left:156.80px;top:481.00px;" width="4" height="5.5" viewBox="0 0 4 5.5"><path d="M3.4 0.2 L0.4 2.7 L3.4 5.2 Z" fill="#777"/></svg>
<svg class="r" style="left:267.80px;top:481.00px;" width="4" height="5.5" viewBox="0 0 4 5.5"><path d="M0.4 0.2 L3.4 2.7 L0.4 5.2 Z" fill="#777"/></svg>
<div class="r" style="left:163.70px;top:481.00px;width:72.50px;height:5.00px;background:#7b7b7b;border-radius:2.5px"></div>
<div class="r" style="left:283.80px;top:118.20px;width:5.10px;height:9.40px;background:#cccccc;"></div>
<svg class="r" style="left:285.00px;top:121.00px;" width="3" height="4" viewBox="0 0 3 4"><path d="M2.6 0.2 L0.3 2 L2.6 3.8 Z" fill="#666"/></svg>
<svg class="r" style="left:297.60px;top:118.80px;" width="8" height="8" viewBox="0 0 8 8"><path d="M3.2 7.6 V1.8 M0.8 3.8 L3.2 1 L5.6 3.8 M3.2 7.2 H6.6" fill="none" stroke="#c4c4c4" stroke-width="1.1"/></svg>
<div class="r" style="left:310.90px;top:116.00px;width:1.00px;height:13.70px;background:#dcdcdc;"></div>
<div class="t " style="left:316.80px;top:121.00px;font-size:6.5px;color:#555;">Files</div>
</div>
<svg class="r" style="left:340.40px;top:137.70px;" width="9.2" height="9.2" viewBox="0 0 9.2 9.2"><rect x="0.75" y="0.75" width="7.5" height="7.6" rx="1.1" fill="#fff" stroke="#747474" stroke-width="1.45"/></svg>
<div class="t " style="left:258.10px;width:120px;text-align:center;top:199.00px;font-size:6.5px;color:#333333;-webkit-text-stroke:0.12px #333">01.Trial Manageme...</div>
<svg class="r" style="left:300.00px;top:149.40px;" width="35" height="31" viewBox="0 0 35 31"><path d="M0 2 Q0 0 2 0 H14 Q16 0 16 2 V3.6 H32.3 Q34.3 3.6 34.3 5.6 V28.2 Q34.3 30.2 32.3 30.2 H2 Q0 30.2 0 28.2 Z" fill="#7a7a7a"/></svg>
<svg class="r" style="left:413.08px;top:137.70px;" width="9.2" height="9.2" viewBox="0 0 9.2 9.2"><rect x="0.75" y="0.75" width="7.5" height="7.6" rx="1.1" fill="#fff" stroke="#747474" stroke-width="1.45"/></svg>
<div class="t " style="left:330.78px;width:120px;text-align:center;top:199.00px;font-size:6.5px;color:#333333;-webkit-text-stroke:0.12px #333">02.Central Trial Do...</div>
<svg class="r" style="left:372.68px;top:149.40px;" width="35" height="31" viewBox="0 0 35 31"><path d="M0 2 Q0 0 2 0 H14 Q16 0 16 2 V3.6 H32.3 Q34.3 3.6 34.3 5.6 V28.2 Q34.3 30.2 32.3 30.2 H2 Q0 30.2 0 28.2 Z" fill="#7a7a7a"/></svg>
<svg class="r" style="left:485.76px;top:137.70px;" width="9.2" height="9.2" viewBox="0 0 9.2 9.2"><rect x="0.75" y="0.75" width="7.5" height="7.6" rx="1.1" fill="#fff" stroke="#747474" stroke-width="1.45"/></svg>
<div class="t " style="left:403.46px;width:120px;text-align:center;top:199.00px;font-size:6.5px;color:#333333;-webkit-text-stroke:0.12px #333">03.Regulatory</div>
<svg class="r" style="left:445.36px;top:149.40px;" width="35" height="31" viewBox="0 0 35 31"><path d="M0 2 Q0 0 2 0 H14 Q16 0 16 2 V3.6 H32.3 Q34.3 3.6 34.3 5.6 V28.2 Q34.3 30.2 32.3 30.2 H2 Q0 30.2 0 28.2 Z" fill="#7a7a7a"/></svg>
<svg class="r" style="left:558.44px;top:137.70px;" width="9.2" height="9.2" viewBox="0 0 9.2 9.2"><rect x="0.75" y="0.75" width="7.5" height="7.6" rx="1.1" fill="#fff" stroke="#747474" stroke-width="1.45"/></svg>
<div class="t " style="left:476.14px;width:120px;text-align:center;top:199.00px;font-size:6.5px;color:#333333;-webkit-text-stroke:0.12px #333">04.IRB or IEC and o...</div>
<svg class="r" style="left:518.04px;top:149.40px;" width="35" height="31" viewBox="0 0 35 31"><path d="M0 2 Q0 0 2 0 H14 Q16 0 16 2 V3.6 H32.3 Q34.3 3.6 34.3 5.6 V28.2 Q34.3 30.2 32.3 30.2 H2 Q0 30.2 0 28.2 Z" fill="#7a7a7a"/></svg>
<svg class="r" style="left:631.12px;top:137.70px;" width="9.2" height="9.2" viewBox="0 0 9.2 9.2"><rect x="0.75" y="0.75" width="7.5" height="7.6" rx="1.1" fill="#fff" stroke="#747474" stroke-width="1.45"/></svg>
<div class="t " style="left:548.82px;width:120px;text-align:center;top:199.00px;font-size:6.5px;color:#333333;-webkit-text-stroke:0.12px #333">05.Site Management</div>
<svg class="r" style="left:590.72px;top:149.40px;" width="35" height="31" viewBox="0 0 35 31"><path d="M0 2 Q0 0 2 0 H14 Q16 0 16 2 V3.6 H32.3 Q34.3 3.6 34.3 5.6 V28.2 Q34.3 30.2 32.3 30.2 H2 Q0 30.2 0 28.2 Z" fill="#7a7a7a"/></svg>
<svg class="r" style="left:703.80px;top:137.70px;" width="9.2" height="9.2" viewBox="0 0 9.2 9.2"><rect x="0.75" y="0.75" width="7.5" height="7.6" rx="1.1" fill="#fff" stroke="#747474" stroke-width="1.45"/></svg>
<div class="t " style="left:621.50px;width:120px;text-align:center;top:199.00px;font-size:6.5px;color:#333333;-webkit-text-stroke:0.12px #333">06.IP and Trial Sup...</div>
<svg class="r" style="left:663.40px;top:149.40px;" width="35" height="31" viewBox="0 0 35 31"><path d="M0 2 Q0 0 2 0 H14 Q16 0 16 2 V3.6 H32.3 Q34.3 3.6 34.3 5.6 V28.2 Q34.3 30.2 32.3 30.2 H2 Q0 30.2 0 28.2 Z" fill="#7a7a7a"/></svg>
<svg class="r" style="left:776.48px;top:137.70px;" width="9.2" height="9.2" viewBox="0 0 9.2 9.2"><rect x="0.75" y="0.75" width="7.5" height="7.6" rx="1.1" fill="#fff" stroke="#747474" stroke-width="1.45"/></svg>
<div class="t " style="left:694.18px;width:120px;text-align:center;top:199.00px;font-size:6.5px;color:#333333;-webkit-text-stroke:0.12px #333">07.Safety Reporting</div>
<svg class="r" style="left:736.08px;top:149.40px;" width="35" height="31" viewBox="0 0 35 31"><path d="M0 2 Q0 0 2 0 H14 Q16 0 16 2 V3.6 H32.3 Q34.3 3.6 34.3 5.6 V28.2 Q34.3 30.2 32.3 30.2 H2 Q0 30.2 0 28.2 Z" fill="#7a7a7a"/></svg>
<svg class="r" style="left:340.40px;top:224.70px;" width="9.2" height="9.2" viewBox="0 0 9.2 9.2"><rect x="0.75" y="0.75" width="7.5" height="7.6" rx="1.1" fill="#fff" stroke="#747474" stroke-width="1.45"/></svg>
<div class="t " style="left:258.10px;width:120px;text-align:center;top:286.00px;font-size:6.5px;color:#333333;-webkit-text-stroke:0.12px #333">08.Central and Loc...</div>
<svg class="r" style="left:300.00px;top:236.40px;" width="35" height="31" viewBox="0 0 35 31"><path d="M0 2 Q0 0 2 0 H14 Q16 0 16 2 V3.6 H32.3 Q34.3 3.6 34.3 5.6 V28.2 Q34.3 30.2 32.3 30.2 H2 Q0 30.2 0 28.2 Z" fill="#7a7a7a"/></svg>
<svg class="r" style="left:413.08px;top:224.70px;" width="9.2" height="9.2" viewBox="0 0 9.2 9.2"><rect x="0.75" y="0.75" width="7.5" height="7.6" rx="1.1" fill="#fff" stroke="#747474" stroke-width="1.45"/></svg>
<div class="t " style="left:330.78px;width:120px;text-align:center;top:286.00px;font-size:6.5px;color:#333333;-webkit-text-stroke:0.12px #333">09.Third parties</div>
<svg class="r" style="left:372.68px;top:236.40px;" width="35" height="31" viewBox="0 0 35 31"><path d="M0 2 Q0 0 2 0 H14 Q16 0 16 2 V3.6 H32.3 Q34.3 3.6 34.3 5.6 V28.2 Q34.3 30.2 32.3 30.2 H2 Q0 30.2 0 28.2 Z" fill="#7a7a7a"/></svg>
<svg class="r" style="left:485.76px;top:224.70px;" width="9.2" height="9.2" viewBox="0 0 9.2 9.2"><rect x="0.75" y="0.75" width="7.5" height="7.6" rx="1.1" fill="#fff" stroke="#747474" stroke-width="1.45"/></svg>
<div class="t " style="left:403.46px;width:120px;text-align:center;top:286.00px;font-size:6.5px;color:#333333;-webkit-text-stroke:0.12px #333">10.Data Managem...</div>
<svg class="r" style="left:445.36px;top:236.40px;" width="35" height="31" viewBox="0 0 35 31"><path d="M0 2 Q0 0 2 0 H14 Q16 0 16 2 V3.6 H32.3 Q34.3 3.6 34.3 5.6 V28.2 Q34.3 30.2 32.3 30.2 H2 Q0 30.2 0 28.2 Z" fill="#7a7a7a"/></svg>
<svg class="r" style="left:558.44px;top:224.70px;" width="9.2" height="9.2" viewBox="0 0 9.2 9.2"><rect x="0.75" y="0.75" width="7.5" height="7.6" rx="1.1" fill="#fff" stroke="#747474" stroke-width="1.45"/></svg>
<div class="t " style="left:476.14px;width:120px;text-align:center;top:286.00px;font-size:6.5px;color:#333333;-webkit-text-stroke:0.12px #333">11.Statistics</div>
<svg class="r" style="left:518.04px;top:236.40px;" width="35" height="31" viewBox="0 0 35 31"><path d="M0 2 Q0 0 2 0 H14 Q16 0 16 2 V3.6 H32.3 Q34.3 3.6 34.3 5.6 V28.2 Q34.3 30.2 32.3 30.2 H2 Q0 30.2 0 28.2 Z" fill="#7a7a7a"/></svg>
<div class="r" style="left:574.32px;top:221.20px;width:69.00px;height:83.10px;background:#ebebeb;"></div>
<svg class="r" style="left:631.12px;top:224.70px;" width="9.2" height="9.2" viewBox="0 0 9.2 9.2"><rect x="0.75" y="0.75" width="7.5" height="7.6" rx="1.1" fill="#fff" stroke="#747474" stroke-width="1.45"/></svg>
<div class="t " style="left:548.82px;width:120px;text-align:center;top:286.00px;font-size:6.5px;color:#333333;-webkit-text-stroke:0.12px #333">Inbox</div>
<svg class="r" style="left:590.72px;top:236.40px;" width="35" height="31" viewBox="0 0 35 31"><path d="M0 2 Q0 0 2 0 H14 Q16 0 16 2 V3.6 H32.3 Q34.3 3.6 34.3 5.6 V28.2 Q34.3 30.2 32.3 30.2 H2 Q0 30.2 0 28.2 Z" fill="#7a7a7a"/></svg>
<svg class="r" style="left:703.80px;top:224.70px;" width="9.2" height="9.2" viewBox="0 0 9.2 9.2"><rect x="0.75" y="0.75" width="7.5" height="7.6" rx="1.1" fill="#fff" stroke="#747474" stroke-width="1.45"/></svg>
<div class="t " style="left:621.50px;width:120px;text-align:center;top:286.00px;font-size:6.5px;color:#333333;-webkit-text-stroke:0.12px #333">Recycle Bin</div>
<svg class="r" style="left:664.05px;top:237.10px;" width="36" height="31" viewBox="0 0 36 31"><path d="M0 2 Q0 0 2 0 H14.5 Q16.5 0 16.5 2 V3.9 H33.2 Q35.2 3.9 35.2 5.9 V28.8 Q35.2 30.8 33.2 30.8 H2 Q0 30.8 0 28.8 Z" fill="#7a7a7a"/><rect x="3.2" y="17.3" width="14.1" height="10.6" rx="1.4" fill="#fff"/><path d="M6.2 17.8 V14.2 Q6.2 11 10.2 11 Q14.2 11 14.2 14.2 V17.8" fill="none" stroke="#fff" stroke-width="2"/></svg>
<svg class="r" style="left:776.48px;top:224.70px;" width="9.2" height="9.2" viewBox="0 0 9.2 9.2"><rect x="0.75" y="0.75" width="7.5" height="7.6" rx="1.1" fill="#fff" stroke="#747474" stroke-width="1.45"/></svg>
<div class="t " style="left:694.18px;width:120px;text-align:center;top:286.00px;font-size:6.5px;color:#333333;-webkit-text-stroke:0.12px #333">350920.jpg</div>
<svg class="r" style="left:731.00px;top:225.00px;" width="45" height="56" viewBox="0 0 45 56"><rect x="1.33" y="1.30" width="42.3" height="53.6" rx="2.4" fill="none" stroke="#000" stroke-opacity="0.05" stroke-width="1"/><rect x="2.03" y="2.00" width="40.9" height="52.3" rx="2" fill="#fff" stroke="#e2e2e2" stroke-width="0.8"/></svg>
<svg class="r" style="left:735.93px;top:229.60px" width="35" height="29.2" viewBox="0 0 35 29"><defs><linearGradient id="ph" x1="0" y1="0" x2="1" y2="0"><stop offset="0" stop-color="#0a1830"/><stop offset="0.3" stop-color="#12305e"/><stop offset="0.6" stop-color="#2c5aa0"/><stop offset="0.85" stop-color="#5a86d0"/><stop offset="0.92" stop-color="#c8d4f4"/><stop offset="1" stop-color="#7090d8"/></linearGradient><radialGradient id="fl" cx="0.5" cy="0.5" r="0.5"><stop offset="0" stop-color="#3a0c00"/><stop offset="0.22" stop-color="#b03a08"/><stop offset="0.45" stop-color="#ee7a10"/><stop offset="1" stop-color="#f9a82a"/></radialGradient></defs><rect width="35" height="29" fill="url(#ph)"/><path d="M23 12 L23.2 29" stroke="#3a6a22" stroke-width="0.9"/><g transform="translate(23 12) scale(1 0.72) rotate(-8) translate(-23 -12)"><ellipse cx="28.25" cy="12" rx="5.78" ry="1.6" fill="#f28a1a" transform="rotate(0.0 23 12) scale(1 1)"/><ellipse cx="27.60" cy="12" rx="5.06" ry="1.6" fill="#f28a1a" transform="rotate(22.5 23 12) scale(1 1)"/><ellipse cx="28.25" cy="12" rx="5.78" ry="1.6" fill="#f28a1a" transform="rotate(45.0 23 12) scale(1 1)"/><ellipse cx="27.60" cy="12" rx="5.06" ry="1.6" fill="#f28a1a" transform="rotate(67.5 23 12) scale(1 1)"/><ellipse cx="28.25" cy="12" rx="5.78" ry="1.6" fill="#f28a1a" transform="rotate(90.0 23 12) scale(1 1)"/><ellipse cx="27.60" cy="12" rx="5.06" ry="1.6" fill="#f28a1a" transform="rotate(112.5 23 12) scale(1 1)"/><ellipse cx="28.25" cy="12" rx="5.78" ry="1.6" fill="#f28a1a" transform="rotate(135.0 23 12) scale(1 1)"/><ellipse cx="27.60" cy="12" rx="5.06" ry="1.6" fill="#f28a1a" transform="rotate(157.5 23 12) scale(1 1)"/><ellipse cx="28.25" cy="12" rx="5.78" ry="1.6" fill="#f28a1a" transform="rotate(180.0 23 12) scale(1 1)"/><ellipse cx="27.60" cy="12" rx="5.06" ry="1.6" fill="#f28a1a" transform="rotate(202.5 23 12) scale(1 1)"/><ellipse cx="28.25" cy="12" rx="5.78" ry="1.6" fill="#f28a1a" transform="rotate(225.0 23 12) scale(1 1)"/><ellipse cx="27.60" cy="12" rx="5.06" ry="1.6" fill="#f28a1a" transform="rotate(247.5 23 12) scale(1 1)"/><ellipse cx="28.25" cy="12" rx="5.78" ry="1.6" fill="#f28a1a" transform="rotate(270.0 23 12) scale(1 1)"/><ellipse cx="27.60" cy="12" rx="5.06" ry="1.6" fill="#f28a1a" transform="rotate(292.5 23 12) scale(1 1)"/><ellipse cx="28.25" cy="12" rx="5.78" ry="1.6" fill="#f28a1a" transform="rotate(315.0 23 12) scale(1 1)"/><ellipse cx="27.60" cy="12" rx="5.06" ry="1.6" fill="#f28a1a" transform="rotate(337.5 23 12) scale(1 1)"/></g><ellipse cx="23" cy="12" rx="10.5" ry="7.4" fill="url(#fl)" opacity="0.55"/><circle cx="23" cy="12" r="2" fill="#4a1200"/></svg>
<svg class="r" style="left:762.93px;top:267.50px;" width="8.2" height="8.2" viewBox="0 0 8.2 8.2"><rect x="0" y="0" width="8" height="8" rx="1.2" fill="#5e5e5e"/><rect x="1.3" y="1.3" width="5.4" height="5.4" fill="#fff"/><path d="M1.3 6.7 L3.1 4.2 L4.4 5.5 L5.3 4.6 L6.7 6.7 Z" fill="#5e5e5e"/><circle cx="2.6" cy="2.8" r="0.7" fill="#5e5e5e"/></svg>
<svg class="r" style="left:340.40px;top:311.70px;" width="9.2" height="9.2" viewBox="0 0 9.2 9.2"><rect x="0.75" y="0.75" width="7.5" height="7.6" rx="1.1" fill="#fff" stroke="#747474" stroke-width="1.45"/></svg>
<div class="t " style="left:258.10px;width:120px;text-align:center;top:373.00px;font-size:6.5px;color:#333333;-webkit-text-stroke:0.12px #333">Confirmation letter....</div>
<svg class="r" style="left:295.00px;top:312.00px;" width="45" height="56" viewBox="0 0 45 56"><rect x="1.25" y="1.30" width="42.3" height="53.6" rx="2.4" fill="none" stroke="#000" stroke-opacity="0.05" stroke-width="1"/><rect x="1.95" y="2.00" width="40.9" height="52.3" rx="2" fill="#fff" stroke="#e2e2e2" stroke-width="0.8"/></svg>
<div class="r" style="left:300.35px;top:319.80px;width:15.00px;height:10.10px;background:#d8d2e8;border:1px solid #9d92c2;border-radius:1.5px"></div>
<div class="t " style="left:247.85px;width:120px;text-align:center;top:323.00px;font-size:5.4px;color:#5d5191;font-weight:700;">MSC</div>
<svg class="r" style="left:326.35px;top:316.70px;" width="11" height="10" viewBox="0 0 11 10"><path d="M5.3 0.2 L6.7 3.4 L10.2 3.6 L7.5 5.9 L8.4 9.3 L5.3 7.4 L2.2 9.3 L3.1 5.9 L0.4 3.6 L3.9 3.4 Z" fill="#f6a623"/></svg>
<div class="r" style="left:300.65px;top:352.50px;width:15.50px;height:9.80px;background:#d3ebf7;border:1px solid #7fc3e6;border-radius:1.5px"></div>
<div class="t " style="left:248.40px;width:120px;text-align:center;top:356.00px;font-size:5.4px;color:#2f8fcf;font-weight:700;">LCK</div>
<svg class="r" style="left:327.15px;top:355.30px;" width="8" height="8" viewBox="0 0 8 8"><rect x="0" y="0" width="7.8" height="7.6" rx="0.8" fill="#6d6d6d"/><text x="3.9" y="6.2" font-family="Liberation Sans" font-size="6" font-weight="bold" fill="#fff" text-anchor="middle">W</text></svg>
<svg class="r" style="left:413.08px;top:311.70px;" width="9.2" height="9.2" viewBox="0 0 9.2 9.2"><rect x="0.75" y="0.75" width="7.5" height="7.6" rx="1.1" fill="#fff" stroke="#747474" stroke-width="1.45"/></svg>
<div class="t " style="left:330.78px;width:120px;text-align:center;top:373.00px;font-size:6.5px;color:#333333;-webkit-text-stroke:0.12px #333">CRA Activity Mana...</div>
<svg class="r" style="left:368.00px;top:312.00px;" width="45" height="56" viewBox="0 0 45 56"><rect x="0.93" y="1.30" width="42.3" height="53.6" rx="2.4" fill="none" stroke="#000" stroke-opacity="0.05" stroke-width="1"/><rect x="1.63" y="2.00" width="40.9" height="52.3" rx="2" fill="#fff" stroke="#e2e2e2" stroke-width="0.8"/></svg>
<svg class="r" style="left:373.53px;top:317.00px;" width="33.5" height="46.3" viewBox="0 0 33.5 46.3"><rect x="0.3" y="0.3" width="32.7" height="45.6" fill="#fff" stroke="#3a3a3a" stroke-width="0.7"/><rect x="0" y="0" width="33.3" height="15" fill="#303030"/><rect x="1.6" y="2.4" width="4.6" height="1.6" fill="#c86a28"/><rect x="9.8" y="2.2" width="12" height="0.8" fill="#a07040"/><rect x="9.8" y="3.9" width="18" height="0.8" fill="#c8c8c8"/><rect x="2" y="7.2" width="5" height="0.6" fill="#6a4c34"/><rect x="10" y="7.2" width="5" height="0.6" fill="#5c5c5c"/><rect x="18" y="7.2" width="5" height="0.6" fill="#6a4c34"/><rect x="26" y="7.2" width="5" height="0.6" fill="#5c5c5c"/><rect x="2" y="9.5" width="5" height="0.6" fill="#6a4c34"/><rect x="10" y="9.5" width="5" height="0.6" fill="#5c5c5c"/><rect x="18" y="9.5" width="5" height="0.6" fill="#6a4c34"/><rect x="26" y="9.5" width="5" height="0.6" fill="#5c5c5c"/><rect x="2" y="11.8" width="5" height="0.6" fill="#6a4c34"/><rect x="10" y="11.8" width="5" height="0.6" fill="#5c5c5c"/><rect x="18" y="11.8" width="5" height="0.6" fill="#6a4c34"/><rect x="26" y="11.8" width="5" height="0.6" fill="#5c5c5c"/><rect x="2" y="18.5" width="8" height="0.55" fill="#777"/><rect x="14.5" y="18.5" width="10" height="0.5" fill="#b0b0b0"/><rect x="2" y="19.8" width="9" height="0.55" fill="#aaa"/><rect x="14.5" y="19.8" width="14" height="0.5" fill="#b0b0b0"/><rect x="2" y="21.1" width="7" height="0.55" fill="#aaa"/><rect x="14.5" y="21.1" width="9" height="0.5" fill="#b0b0b0"/><rect x="2" y="24.5" width="7" height="0.55" fill="#777"/><rect x="2" y="26.0" width="6" height="0.55" fill="#aaa"/><rect x="2" y="27.5" width="5" height="0.55" fill="#aaa"/><rect x="2" y="29.0" width="4" height="0.55" fill="#aaa"/><rect x="14.5" y="24.5" width="15" height="0.5" fill="#b4b4b4"/><rect x="14.5" y="25.9" width="14" height="0.5" fill="#b4b4b4"/><rect x="14.5" y="27.3" width="15" height="0.5" fill="#b4b4b4"/><rect x="14.5" y="28.7" width="12" height="0.5" fill="#b4b4b4"/><rect x="14.5" y="30.1" width="14" height="0.5" fill="#b4b4b4"/><rect x="14.5" y="31.5" width="8" height="0.5" fill="#b4b4b4"/><rect x="2" y="37.5" width="6" height="0.6" fill="#a8a8a8"/><rect x="2" y="39.3" width="7" height="0.5" fill="#c8c8c8"/><rect x="2" y="40.6" width="5" height="0.5" fill="#c8c8c8"/><rect x="13.5" y="37.3" width="1.3" height="1.6" fill="#5a8ad0"/><rect x="16" y="38" width="3.5" height="0.6" fill="#9ab0d8"/><rect x="20.5" y="38" width="3" height="0.6" fill="#7a9ad0"/><rect x="13.5" y="40.4" width="4" height="0.5" fill="#b8c8e0"/><rect x="19" y="40.4" width="5" height="0.5" fill="#c8b8d8"/></svg>
<svg class="r" style="left:399.73px;top:355.30px;" width="8.5" height="8" viewBox="0 0 8.5 8"><rect x="0" y="0" width="8" height="7.6" rx="0.6" fill="#e5484d"/><path d="M2 6.4 Q4 2.2 4 1.4 Q4 0.9 3.7 1.2 Q3.4 2 4.6 4.2 Q5.6 5.8 6.6 5.6 Q6.8 5.2 5.2 5 Q3.2 5 1.6 6 Q1.4 6.4 2 6.4" fill="none" stroke="#fff" stroke-width="0.7"/></svg>
<svg class="r" style="left:485.76px;top:311.70px;" width="9.2" height="9.2" viewBox="0 0 9.2 9.2"><rect x="0.75" y="0.75" width="7.5" height="7.6" rx="1.1" fill="#fff" stroke="#747474" stroke-width="1.45"/></svg>
<div class="t " style="left:403.46px;width:120px;text-align:center;top:373.00px;font-size:6.5px;color:#333333;-webkit-text-stroke:0.12px #333">CRA Activity Mana...</div>
<svg class="r" style="left:440.00px;top:312.00px;" width="45" height="56" viewBox="0 0 45 56"><rect x="1.61" y="1.30" width="42.3" height="53.6" rx="2.4" fill="none" stroke="#000" stroke-opacity="0.05" stroke-width="1"/><rect x="2.31" y="2.00" width="40.9" height="52.3" rx="2" fill="#fff" stroke="#e2e2e2" stroke-width="0.8"/></svg>
<svg class="r" style="left:446.21px;top:317.00px;" width="33.5" height="46.3" viewBox="0 0 33.5 46.3"><rect x="0.3" y="0.3" width="32.7" height="45.6" fill="#fff" stroke="#3a3a3a" stroke-width="0.7"/><rect x="0" y="0" width="33.3" height="15" fill="#303030"/><rect x="1.6" y="2.4" width="4.6" height="1.6" fill="#c86a28"/><rect x="9.8" y="2.2" width="12" height="0.8" fill="#a07040"/><rect x="9.8" y="3.9" width="18" height="0.8" fill="#c8c8c8"/><rect x="2" y="7.2" width="5" height="0.6" fill="#6a4c34"/><rect x="10" y="7.2" width="5" height="0.6" fill="#5c5c5c"/><rect x="18" y="7.2" width="5" height="0.6" fill="#6a4c34"/><rect x="26" y="7.2" width="5" height="0.6" fill="#5c5c5c"/><rect x="2" y="9.5" width="5" height="0.6" fill="#6a4c34"/><rect x="10" y="9.5" width="5" height="0.6" fill="#5c5c5c"/><rect x="18" y="9.5" width="5" height="0.6" fill="#6a4c34"/><rect x="26" y="9.5" width="5" height="0.6" fill="#5c5c5c"/><rect x="2" y="11.8" width="5" height="0.6" fill="#6a4c34"/><rect x="10" y="11.8" width="5" height="0.6" fill="#5c5c5c"/><rect x="18" y="11.8" width="5" height="0.6" fill="#6a4c34"/><rect x="26" y="11.8" width="5" height="0.6" fill="#5c5c5c"/><rect x="2" y="18.5" width="8" height="0.55" fill="#777"/><rect x="14.5" y="18.5" width="10" height="0.5" fill="#b0b0b0"/><rect x="2" y="19.8" width="9" height="0.55" fill="#aaa"/><rect x="14.5" y="19.8" width="14" height="0.5" fill="#b0b0b0"/><rect x="2" y="21.1" width="7" height="0.55" fill="#aaa"/><rect x="14.5" y="21.1" width="9" height="0.5" fill="#b0b0b0"/><rect x="2" y="24.5" width="7" height="0.55" fill="#777"/><rect x="2" y="26.0" width="6" height="0.55" fill="#aaa"/><rect x="2" y="27.5" width="5" height="0.55" fill="#aaa"/><rect x="2" y="29.0" width="4" height="0.55" fill="#aaa"/><rect x="14.5" y="24.5" width="15" height="0.5" fill="#b4b4b4"/><rect x="14.5" y="25.9" width="14" height="0.5" fill="#b4b4b4"/><rect x="14.5" y="27.3" width="15" height="0.5" fill="#b4b4b4"/><rect x="14.5" y="28.7" width="12" height="0.5" fill="#b4b4b4"/><rect x="14.5" y="30.1" width="14" height="0.5" fill="#b4b4b4"/><rect x="14.5" y="31.5" width="8" height="0.5" fill="#b4b4b4"/><rect x="2" y="37.5" width="6" height="0.6" fill="#a8a8a8"/><rect x="2" y="39.3" width="7" height="0.5" fill="#c8c8c8"/><rect x="2" y="40.6" width="5" height="0.5" fill="#c8c8c8"/><rect x="13.5" y="37.3" width="1.3" height="1.6" fill="#5a8ad0"/><rect x="16" y="38" width="3.5" height="0.6" fill="#9ab0d8"/><rect x="20.5" y="38" width="3" height="0.6" fill="#7a9ad0"/><rect x="13.5" y="40.4" width="4" height="0.5" fill="#b8c8e0"/><rect x="19" y="40.4" width="5" height="0.5" fill="#c8b8d8"/></svg>
<svg class="r" style="left:472.41px;top:355.30px;" width="8.5" height="8" viewBox="0 0 8.5 8"><rect x="0" y="0" width="8" height="7.6" rx="0.6" fill="#e5484d"/><path d="M2 6.4 Q4 2.2 4 1.4 Q4 0.9 3.7 1.2 Q3.4 2 4.6 4.2 Q5.6 5.8 6.6 5.6 Q6.8 5.2 5.2 5 Q3.2 5 1.6 6 Q1.4 6.4 2 6.4" fill="none" stroke="#fff" stroke-width="0.7"/></svg>
<svg class="r" style="left:558.44px;top:311.70px;" width="9.2" height="9.2" viewBox="0 0 9.2 9.2"><rect x="0.75" y="0.75" width="7.5" height="7.6" rx="1.1" fill="#fff" stroke="#747474" stroke-width="1.45"/></svg>
<div class="t " style="left:476.14px;width:120px;text-align:center;top:373.00px;font-size:6.5px;color:#333333;-webkit-text-stroke:0.12px #333">CV_Jimmy Goldfis...</div>
<svg class="r" style="left:513.00px;top:312.00px;" width="45" height="56" viewBox="0 0 45 56"><rect x="1.29" y="1.30" width="42.3" height="53.6" rx="2.4" fill="none" stroke="#000" stroke-opacity="0.05" stroke-width="1"/><rect x="1.99" y="2.00" width="40.9" height="52.3" rx="2" fill="#fff" stroke="#e2e2e2" stroke-width="0.8"/></svg>
<svg class="r" style="left:522.59px;top:326.60px;" width="24" height="28" viewBox="0 0 24 28"><path d="M11.5 2 Q13.5 1.5 13 6 Q12 12 8 19 Q4 25.5 2 24 Q0.5 22 6 19.5 Q12 17 18 17.5 Q23 18.5 21.5 20 Q19 21.5 15 17 Q11 11.5 10.5 6 Q10.5 2.5 11.5 2 Z" fill="none" stroke="#bdbdbd" stroke-width="1.4"/></svg>
<div class="r" style="left:518.39px;top:319.80px;width:15.00px;height:10.10px;background:#d8d2e8;border:1px solid #9d92c2;border-radius:1.5px"></div>
<div class="t " style="left:465.89px;width:120px;text-align:center;top:323.00px;font-size:5.4px;color:#5d5191;font-weight:700;">MSC</div>
<svg class="r" style="left:544.39px;top:316.70px;" width="11" height="10" viewBox="0 0 11 10"><path d="M5.3 0.2 L6.7 3.4 L10.2 3.6 L7.5 5.9 L8.4 9.3 L5.3 7.4 L2.2 9.3 L3.1 5.9 L0.4 3.6 L3.9 3.4 Z" fill="#f6a623"/></svg>
<div class="r" style="left:518.69px;top:352.50px;width:15.50px;height:9.80px;background:#d3ebf7;border:1px solid #7fc3e6;border-radius:1.5px"></div>
<div class="t " style="left:466.44px;width:120px;text-align:center;top:356.00px;font-size:5.4px;color:#2f8fcf;font-weight:700;">LCK</div>
<svg class="r" style="left:545.09px;top:355.30px;" width="8.5" height="8" viewBox="0 0 8.5 8"><rect x="0" y="0" width="8" height="7.6" rx="0.6" fill="#e5484d"/><path d="M2 6.4 Q4 2.2 4 1.4 Q4 0.9 3.7 1.2 Q3.4 2 4.6 4.2 Q5.6 5.8 6.6 5.6 Q6.8 5.2 5.2 5 Q3.2 5 1.6 6 Q1.4 6.4 2 6.4" fill="none" stroke="#fff" stroke-width="0.7"/></svg>
<svg class="r" style="left:631.12px;top:311.70px;" width="9.2" height="9.2" viewBox="0 0 9.2 9.2"><rect x="0.75" y="0.75" width="7.5" height="7.6" rx="1.1" fill="#fff" stroke="#747474" stroke-width="1.45"/></svg>
<div class="t " style="left:548.82px;width:120px;text-align:center;top:373.00px;font-size:6.5px;color:#333333;-webkit-text-stroke:0.12px #333">Flex Databases eT...</div>
<svg class="r" style="left:586.00px;top:312.00px;" width="45" height="56" viewBox="0 0 45 56"><rect x="0.97" y="1.30" width="42.3" height="53.6" rx="2.4" fill="none" stroke="#000" stroke-opacity="0.05" stroke-width="1"/><rect x="1.67" y="2.00" width="40.9" height="52.3" rx="2" fill="#fff" stroke="#e2e2e2" stroke-width="0.8"/></svg>
<svg class="r" style="left:591.57px;top:317.00px;" width="33.5" height="46.3" viewBox="0 0 33.5 46.3"><rect x="0.3" y="0.3" width="32.7" height="45.6" fill="#fff" stroke="#3a3a3a" stroke-width="0.7"/><rect x="0" y="0" width="33.3" height="15" fill="#303030"/><rect x="1.6" y="2.4" width="4.6" height="1.6" fill="#c86a28"/><rect x="9.8" y="2.2" width="12" height="0.8" fill="#a07040"/><rect x="9.8" y="3.9" width="18" height="0.8" fill="#c8c8c8"/><rect x="2" y="7.2" width="5" height="0.6" fill="#6a4c34"/><rect x="10" y="7.2" width="5" height="0.6" fill="#5c5c5c"/><rect x="18" y="7.2" width="5" height="0.6" fill="#6a4c34"/><rect x="26" y="7.2" width="5" height="0.6" fill="#5c5c5c"/><rect x="2" y="9.5" width="5" height="0.6" fill="#6a4c34"/><rect x="10" y="9.5" width="5" height="0.6" fill="#5c5c5c"/><rect x="18" y="9.5" width="5" height="0.6" fill="#6a4c34"/><rect x="26" y="9.5" width="5" height="0.6" fill="#5c5c5c"/><rect x="2" y="11.8" width="5" height="0.6" fill="#6a4c34"/><rect x="10" y="11.8" width="5" height="0.6" fill="#5c5c5c"/><rect x="18" y="11.8" width="5" height="0.6" fill="#6a4c34"/><rect x="26" y="11.8" width="5" height="0.6" fill="#5c5c5c"/><rect x="2" y="18.5" width="8" height="0.55" fill="#777"/><rect x="14.5" y="18.5" width="10" height="0.5" fill="#b0b0b0"/><rect x="2" y="19.8" width="9" height="0.55" fill="#aaa"/><rect x="14.5" y="19.8" width="14" height="0.5" fill="#b0b0b0"/><rect x="2" y="21.1" width="7" height="0.55" fill="#aaa"/><rect x="14.5" y="21.1" width="9" height="0.5" fill="#b0b0b0"/><rect x="2" y="24.5" width="7" height="0.55" fill="#777"/><rect x="2" y="26.0" width="6" height="0.55" fill="#aaa"/><rect x="2" y="27.5" width="5" height="0.55" fill="#aaa"/><rect x="2" y="29.0" width="4" height="0.55" fill="#aaa"/><rect x="14.5" y="24.5" width="15" height="0.5" fill="#b4b4b4"/><rect x="14.5" y="25.9" width="14" height="0.5" fill="#b4b4b4"/><rect x="14.5" y="27.3" width="15" height="0.5" fill="#b4b4b4"/><rect x="14.5" y="28.7" width="12" height="0.5" fill="#b4b4b4"/><rect x="14.5" y="30.1" width="14" height="0.5" fill="#b4b4b4"/><rect x="14.5" y="31.5" width="8" height="0.5" fill="#b4b4b4"/><rect x="2" y="37.5" width="6" height="0.6" fill="#a8a8a8"/><rect x="2" y="39.3" width="7" height="0.5" fill="#c8c8c8"/><rect x="2" y="40.6" width="5" height="0.5" fill="#c8c8c8"/><rect x="13.5" y="37.3" width="1.3" height="1.6" fill="#5a8ad0"/><rect x="16" y="38" width="3.5" height="0.6" fill="#9ab0d8"/><rect x="20.5" y="38" width="3" height="0.6" fill="#7a9ad0"/><rect x="13.5" y="40.4" width="4" height="0.5" fill="#b8c8e0"/><rect x="19" y="40.4" width="5" height="0.5" fill="#c8b8d8"/></svg>
<svg class="r" style="left:617.77px;top:355.30px;" width="8.5" height="8" viewBox="0 0 8.5 8"><rect x="0" y="0" width="8" height="7.6" rx="0.6" fill="#e5484d"/><path d="M2 6.4 Q4 2.2 4 1.4 Q4 0.9 3.7 1.2 Q3.4 2 4.6 4.2 Q5.6 5.8 6.6 5.6 Q6.8 5.2 5.2 5 Q3.2 5 1.6 6 Q1.4 6.4 2 6.4" fill="none" stroke="#fff" stroke-width="0.7"/></svg>
<svg class="r" style="left:703.80px;top:311.70px;" width="9.2" height="9.2" viewBox="0 0 9.2 9.2"><rect x="0.75" y="0.75" width="7.5" height="7.6" rx="1.1" fill="#fff" stroke="#747474" stroke-width="1.45"/></svg>
<div class="t " style="left:621.50px;width:120px;text-align:center;top:373.00px;font-size:6.5px;color:#333333;-webkit-text-stroke:0.12px #333">Flex Databases Sy...</div>
<svg class="r" style="left:658.00px;top:312.00px;" width="45" height="56" viewBox="0 0 45 56"><rect x="1.65" y="1.30" width="42.3" height="53.6" rx="2.4" fill="none" stroke="#000" stroke-opacity="0.05" stroke-width="1"/><rect x="2.35" y="2.00" width="40.9" height="52.3" rx="2" fill="#fff" stroke="#e2e2e2" stroke-width="0.8"/></svg>
<svg class="r" style="left:664.25px;top:317.00px;" width="33.5" height="46.3" viewBox="0 0 33.5 46.3"><rect x="0.3" y="0.3" width="32.7" height="45.6" fill="#fff" stroke="#3a3a3a" stroke-width="0.7"/><rect x="0" y="0" width="33.3" height="15" fill="#303030"/><rect x="1.6" y="2.4" width="4.6" height="1.6" fill="#c86a28"/><rect x="9.8" y="2.2" width="12" height="0.8" fill="#a07040"/><rect x="9.8" y="3.9" width="18" height="0.8" fill="#c8c8c8"/><rect x="2" y="7.2" width="5" height="0.6" fill="#6a4c34"/><rect x="10" y="7.2" width="5" height="0.6" fill="#5c5c5c"/><rect x="18" y="7.2" width="5" height="0.6" fill="#6a4c34"/><rect x="26" y="7.2" width="5" height="0.6" fill="#5c5c5c"/><rect x="2" y="9.5" width="5" height="0.6" fill="#6a4c34"/><rect x="10" y="9.5" width="5" height="0.6" fill="#5c5c5c"/><rect x="18" y="9.5" width="5" height="0.6" fill="#6a4c34"/><rect x="26" y="9.5" width="5" height="0.6" fill="#5c5c5c"/><rect x="2" y="11.8" width="5" height="0.6" fill="#6a4c34"/><rect x="10" y="11.8" width="5" height="0.6" fill="#5c5c5c"/><rect x="18" y="11.8" width="5" height="0.6" fill="#6a4c34"/><rect x="26" y="11.8" width="5" height="0.6" fill="#5c5c5c"/><rect x="2" y="18.5" width="8" height="0.55" fill="#777"/><rect x="14.5" y="18.5" width="10" height="0.5" fill="#b0b0b0"/><rect x="2" y="19.8" width="9" height="0.55" fill="#aaa"/><rect x="14.5" y="19.8" width="14" height="0.5" fill="#b0b0b0"/><rect x="2" y="21.1" width="7" height="0.55" fill="#aaa"/><rect x="14.5" y="21.1" width="9" height="0.5" fill="#b0b0b0"/><rect x="2" y="24.5" width="7" height="0.55" fill="#777"/><rect x="2" y="26.0" width="6" height="0.55" fill="#aaa"/><rect x="2" y="27.5" width="5" height="0.55" fill="#aaa"/><rect x="2" y="29.0" width="4" height="0.55" fill="#aaa"/><rect x="14.5" y="24.5" width="15" height="0.5" fill="#b4b4b4"/><rect x="14.5" y="25.9" width="14" height="0.5" fill="#b4b4b4"/><rect x="14.5" y="27.3" width="15" height="0.5" fill="#b4b4b4"/><rect x="14.5" y="28.7" width="12" height="0.5" fill="#b4b4b4"/><rect x="14.5" y="30.1" width="14" height="0.5" fill="#b4b4b4"/><rect x="14.5" y="31.5" width="8" height="0.5" fill="#b4b4b4"/><rect x="2" y="37.5" width="6" height="0.6" fill="#a8a8a8"/><rect x="2" y="39.3" width="7" height="0.5" fill="#c8c8c8"/><rect x="2" y="40.6" width="5" height="0.5" fill="#c8c8c8"/><rect x="13.5" y="37.3" width="1.3" height="1.6" fill="#5a8ad0"/><rect x="16" y="38" width="3.5" height="0.6" fill="#9ab0d8"/><rect x="20.5" y="38" width="3" height="0.6" fill="#7a9ad0"/><rect x="13.5" y="40.4" width="4" height="0.5" fill="#b8c8e0"/><rect x="19" y="40.4" width="5" height="0.5" fill="#c8b8d8"/></svg>
<svg class="r" style="left:690.45px;top:355.30px;" width="8.5" height="8" viewBox="0 0 8.5 8"><rect x="0" y="0" width="8" height="7.6" rx="0.6" fill="#e5484d"/><path d="M2 6.4 Q4 2.2 4 1.4 Q4 0.9 3.7 1.2 Q3.4 2 4.6 4.2 Q5.6 5.8 6.6 5.6 Q6.8 5.2 5.2 5 Q3.2 5 1.6 6 Q1.4 6.4 2 6.4" fill="none" stroke="#fff" stroke-width="0.7"/></svg>
<svg class="r" style="left:776.48px;top:311.70px;" width="9.2" height="9.2" viewBox="0 0 9.2 9.2"><rect x="0.75" y="0.75" width="7.5" height="7.6" rx="1.1" fill="#fff" stroke="#747474" stroke-width="1.45"/></svg>
<div class="t " style="left:694.18px;width:120px;text-align:center;top:373.00px;font-size:6.5px;color:#333333;-webkit-text-stroke:0.12px #333">Flex Databases Sy...</div>
<svg class="r" style="left:731.00px;top:312.00px;" width="45" height="56" viewBox="0 0 45 56"><rect x="1.33" y="1.30" width="42.3" height="53.6" rx="2.4" fill="none" stroke="#000" stroke-opacity="0.05" stroke-width="1"/><rect x="2.03" y="2.00" width="40.9" height="52.3" rx="2" fill="#fff" stroke="#e2e2e2" stroke-width="0.8"/></svg>
<svg class="r" style="left:736.93px;top:317.00px;" width="33.5" height="46.3" viewBox="0 0 33.5 46.3"><rect x="0.3" y="0.3" width="32.7" height="45.6" fill="#fff" stroke="#3a3a3a" stroke-width="0.7"/><rect x="0" y="0" width="33.3" height="15" fill="#303030"/><rect x="1.6" y="2.4" width="4.6" height="1.6" fill="#c86a28"/><rect x="9.8" y="2.2" width="12" height="0.8" fill="#a07040"/><rect x="9.8" y="3.9" width="18" height="0.8" fill="#c8c8c8"/><rect x="2" y="7.2" width="5" height="0.6" fill="#6a4c34"/><rect x="10" y="7.2" width="5" height="0.6" fill="#5c5c5c"/><rect x="18" y="7.2" width="5" height="0.6" fill="#6a4c34"/><rect x="26" y="7.2" width="5" height="0.6" fill="#5c5c5c"/><rect x="2" y="9.5" width="5" height="0.6" fill="#6a4c34"/><rect x="10" y="9.5" width="5" height="0.6" fill="#5c5c5c"/><rect x="18" y="9.5" width="5" height="0.6" fill="#6a4c34"/><rect x="26" y="9.5" width="5" height="0.6" fill="#5c5c5c"/><rect x="2" y="11.8" width="5" height="0.6" fill="#6a4c34"/><rect x="10" y="11.8" width="5" height="0.6" fill="#5c5c5c"/><rect x="18" y="11.8" width="5" height="0.6" fill="#6a4c34"/><rect x="26" y="11.8" width="5" height="0.6" fill="#5c5c5c"/><rect x="2" y="18.5" width="8" height="0.55" fill="#777"/><rect x="14.5" y="18.5" width="10" height="0.5" fill="#b0b0b0"/><rect x="2" y="19.8" width="9" height="0.55" fill="#aaa"/><rect x="14.5" y="19.8" width="14" height="0.5" fill="#b0b0b0"/><rect x="2" y="21.1" width="7" height="0.55" fill="#aaa"/><rect x="14.5" y="21.1" width="9" height="0.5" fill="#b0b0b0"/><rect x="2" y="24.5" width="7" height="0.55" fill="#777"/><rect x="2" y="26.0" width="6" height="0.55" fill="#aaa"/><rect x="2" y="27.5" width="5" height="0.55" fill="#aaa"/><rect x="2" y="29.0" width="4" height="0.55" fill="#aaa"/><rect x="14.5" y="24.5" width="15" height="0.5" fill="#b4b4b4"/><rect x="14.5" y="25.9" width="14" height="0.5" fill="#b4b4b4"/><rect x="14.5" y="27.3" width="15" height="0.5" fill="#b4b4b4"/><rect x="14.5" y="28.7" width="12" height="0.5" fill="#b4b4b4"/><rect x="14.5" y="30.1" width="14" height="0.5" fill="#b4b4b4"/><rect x="14.5" y="31.5" width="8" height="0.5" fill="#b4b4b4"/><rect x="2" y="37.5" width="6" height="0.6" fill="#a8a8a8"/><rect x="2" y="39.3" width="7" height="0.5" fill="#c8c8c8"/><rect x="2" y="40.6" width="5" height="0.5" fill="#c8c8c8"/><rect x="13.5" y="37.3" width="1.3" height="1.6" fill="#5a8ad0"/><rect x="16" y="38" width="3.5" height="0.6" fill="#9ab0d8"/><rect x="20.5" y="38" width="3" height="0.6" fill="#7a9ad0"/><rect x="13.5" y="40.4" width="4" height="0.5" fill="#b8c8e0"/><rect x="19" y="40.4" width="5" height="0.5" fill="#c8b8d8"/></svg>
<svg class="r" style="left:763.13px;top:355.30px;" width="8.5" height="8" viewBox="0 0 8.5 8"><rect x="0" y="0" width="8" height="7.6" rx="0.6" fill="#e5484d"/><path d="M2 6.4 Q4 2.2 4 1.4 Q4 0.9 3.7 1.2 Q3.4 2 4.6 4.2 Q5.6 5.8 6.6 5.6 Q6.8 5.2 5.2 5 Q3.2 5 1.6 6 Q1.4 6.4 2 6.4" fill="none" stroke="#fff" stroke-width="0.7"/></svg>
<svg class="r" style="left:340.40px;top:398.70px;" width="9.2" height="9.2" viewBox="0 0 9.2 9.2"><rect x="0.75" y="0.75" width="7.5" height="7.6" rx="1.1" fill="#fff" stroke="#747474" stroke-width="1.45"/></svg>
<div class="t " style="left:258.10px;width:120px;text-align:center;top:460.00px;font-size:6.5px;color:#333333;-webkit-text-stroke:0.12px #333">Flexin_501_Kunstle...</div>
<svg class="r" style="left:295.00px;top:399.00px;" width="45" height="56" viewBox="0 0 45 56"><rect x="1.25" y="1.30" width="42.3" height="53.6" rx="2.4" fill="none" stroke="#000" stroke-opacity="0.05" stroke-width="1"/><rect x="1.95" y="2.00" width="40.9" height="52.3" rx="2" fill="#fff" stroke="#e2e2e2" stroke-width="0.8"/></svg>
<svg class="r" style="left:300.05px;top:403.10px;" width="34" height="46" viewBox="0 0 34 46"><rect x="16" y="2.8" width="8" height="0.6" fill="#999"/><rect x="3" y="11.5" width="22" height="0.5" fill="#c4c4c4"/><rect x="3" y="13" width="26" height="0.5" fill="#c4c4c4"/><rect x="3" y="14.5" width="26" height="0.5" fill="#c4c4c4"/><rect x="3" y="15.8" width="26" height="0.5" fill="#c4c4c4"/><rect x="3" y="17" width="18" height="0.5" fill="#c4c4c4"/><rect x="3" y="18.3" width="18" height="0.5" fill="#c4c4c4"/><rect x="5.5" y="19.5" width="22" height="0.5" fill="#9ab2e0"/><rect x="5.5" y="20.7" width="24" height="0.5" fill="#9ab2e0"/><rect x="5.5" y="21.9" width="20" height="0.5" fill="#9ab2e0"/><rect x="5.5" y="23.1" width="22" height="0.5" fill="#c4c4c4"/><rect x="5.5" y="24.3" width="10" height="0.5" fill="#c4c4c4"/><rect x="5.5" y="25.5" width="24.5" height="0.5" fill="#c4c4c4"/><rect x="5.5" y="26.7" width="14" height="0.5" fill="#c4c4c4"/><rect x="5.5" y="27.9" width="14" height="0.5" fill="#c4c4c4"/><rect x="5.5" y="29.1" width="18" height="0.5" fill="#c4c4c4"/><rect x="3" y="30.3" width="18" height="0.5" fill="#c4c4c4"/><rect x="3" y="31.5" width="26" height="0.5" fill="#c4c4c4"/><rect x="3" y="33" width="20" height="0.5" fill="#c4c4c4"/><rect x="5" y="34.5" width="20" height="0.5" fill="#c4c4c4"/><rect x="5" y="36" width="18" height="0.5" fill="#c4c4c4"/><rect x="3" y="38" width="10" height="0.5" fill="#c4c4c4"/><rect x="3" y="39.5" width="22" height="0.5" fill="#c4c4c4"/><rect x="3" y="41.5" width="20" height="0.6" fill="#aaa"/><rect x="3" y="43" width="4" height="0.5" fill="#bbb"/><rect x="13" y="43" width="4" height="0.5" fill="#bbb"/></svg>
<div class="r" style="left:300.35px;top:406.10px;width:15.00px;height:10.10px;background:#d8d2e8;border:1px solid #9d92c2;border-radius:1.5px"></div>
<div class="t " style="left:247.85px;width:120px;text-align:center;top:409.00px;font-size:5.4px;color:#5d5191;font-weight:700;">MSC</div>
<svg class="r" style="left:327.15px;top:442.30px;" width="8" height="8" viewBox="0 0 8 8"><rect x="0" y="0" width="7.8" height="7.6" rx="0.8" fill="#2d86d8"/><text x="3.9" y="6.2" font-family="Liberation Sans" font-size="6" font-weight="bold" fill="#fff" text-anchor="middle">W</text></svg>
<svg class="r" style="left:413.08px;top:398.70px;" width="9.2" height="9.2" viewBox="0 0 9.2 9.2"><rect x="0.75" y="0.75" width="7.5" height="7.6" rx="1.1" fill="#fff" stroke="#747474" stroke-width="1.45"/></svg>
<div class="t " style="left:330.78px;width:120px;text-align:center;top:460.00px;font-size:6.5px;color:#333333;-webkit-text-stroke:0.12px #333">Flexin_501_Kunstle...</div>
<svg class="r" style="left:368.00px;top:399.00px;" width="45" height="56" viewBox="0 0 45 56"><rect x="0.93" y="1.30" width="42.3" height="53.6" rx="2.4" fill="none" stroke="#000" stroke-opacity="0.05" stroke-width="1"/><rect x="1.63" y="2.00" width="40.9" height="52.3" rx="2" fill="#fff" stroke="#e2e2e2" stroke-width="0.8"/></svg>
<svg class="r" style="left:372.73px;top:403.10px;" width="34" height="46" viewBox="0 0 34 46"><rect x="3" y="3" width="13" height="0.7" fill="#a0a0a0"/><rect x="3" y="4.5" width="4" height="0.5" fill="#b0b0b0"/><rect x="3" y="7" width="6" height="0.45" fill="#c0c0c0"/><rect x="3" y="8.2" width="3" height="0.45" fill="#c0c0c0"/><rect x="3" y="9.4" width="3" height="0.45" fill="#c0c0c0"/><rect x="3" y="10.6" width="5" height="0.45" fill="#c0c0c0"/><rect x="3" y="12.8" width="7" height="0.45" fill="#c0c0c0"/><rect x="3" y="14.6" width="3" height="0.45" fill="#c0c0c0"/><rect x="3" y="17.0" width="30" height="0.45" fill="#b8b8b8"/><rect x="3" y="18.35" width="30" height="0.45" fill="#b8b8b8"/><rect x="3" y="19.7" width="12" height="0.45" fill="#b8b8b8"/><rect x="3" y="21.8" width="30" height="0.45" fill="#b8b8b8"/><rect x="3" y="23.150000000000002" width="30" height="0.45" fill="#b8b8b8"/><rect x="3" y="24.5" width="30" height="0.45" fill="#b8b8b8"/><rect x="3" y="25.85" width="18" height="0.45" fill="#b8b8b8"/><rect x="3" y="27.6" width="30" height="0.45" fill="#b8b8b8"/><rect x="3" y="28.950000000000003" width="30" height="0.45" fill="#b8b8b8"/><rect x="3" y="30.3" width="12" height="0.45" fill="#b8b8b8"/><rect x="3" y="32.6" width="30" height="0.45" fill="#b8b8b8"/><rect x="3" y="33.95" width="22" height="0.45" fill="#b8b8b8"/><rect x="3" y="38.5" width="3" height="0.45" fill="#bbb"/><rect x="20" y="39.5" width="4" height="0.45" fill="#bbb"/></svg>
<div class="r" style="left:373.33px;top:439.50px;width:15.50px;height:9.80px;background:#d3ebf7;border:1px solid #7fc3e6;border-radius:1.5px"></div>
<div class="t " style="left:321.08px;width:120px;text-align:center;top:443.00px;font-size:5.4px;color:#2f8fcf;font-weight:700;">LCK</div>
<svg class="r" style="left:399.83px;top:442.30px;" width="8" height="8" viewBox="0 0 8 8"><rect x="0" y="0" width="7.8" height="7.6" rx="0.8" fill="#2d86d8"/><text x="3.9" y="6.2" font-family="Liberation Sans" font-size="6" font-weight="bold" fill="#fff" text-anchor="middle">W</text></svg>
<svg class="r" style="left:485.76px;top:398.70px;" width="9.2" height="9.2" viewBox="0 0 9.2 9.2"><rect x="0.75" y="0.75" width="7.5" height="7.6" rx="1.1" fill="#fff" stroke="#747474" stroke-width="1.45"/></svg>
<div class="t " style="left:403.46px;width:120px;text-align:center;top:460.00px;font-size:6.5px;color:#333333;-webkit-text-stroke:0.12px #333">Flexin_501_Kunstle...</div>
<svg class="r" style="left:440.00px;top:399.00px;" width="45" height="56" viewBox="0 0 45 56"><rect x="1.61" y="1.30" width="42.3" height="53.6" rx="2.4" fill="none" stroke="#000" stroke-opacity="0.05" stroke-width="1"/><rect x="2.31" y="2.00" width="40.9" height="52.3" rx="2" fill="#fff" stroke="#e2e2e2" stroke-width="0.8"/></svg>
<svg class="r" style="left:445.41px;top:403.10px;" width="34" height="46" viewBox="0 0 34 46"><rect x="3" y="3" width="13" height="0.7" fill="#a0a0a0"/><rect x="3" y="4.5" width="4" height="0.5" fill="#b0b0b0"/><rect x="3" y="7" width="6" height="0.45" fill="#c0c0c0"/><rect x="3" y="8.2" width="3" height="0.45" fill="#c0c0c0"/><rect x="3" y="9.4" width="3" height="0.45" fill="#c0c0c0"/><rect x="3" y="10.6" width="5" height="0.45" fill="#c0c0c0"/><rect x="3" y="12.8" width="7" height="0.45" fill="#c0c0c0"/><rect x="3" y="14.6" width="3" height="0.45" fill="#c0c0c0"/><rect x="3" y="17.0" width="30" height="0.45" fill="#b8b8b8"/><rect x="3" y="18.35" width="30" height="0.45" fill="#b8b8b8"/><rect x="3" y="19.7" width="18" height="0.45" fill="#b8b8b8"/><rect x="3" y="21.8" width="30" height="0.45" fill="#b8b8b8"/><rect x="3" y="23.150000000000002" width="30" height="0.45" fill="#b8b8b8"/><rect x="3" y="24.5" width="30" height="0.45" fill="#b8b8b8"/><rect x="3" y="25.85" width="18" height="0.45" fill="#b8b8b8"/><rect x="3" y="27.6" width="30" height="0.45" fill="#b8b8b8"/><rect x="3" y="28.950000000000003" width="30" height="0.45" fill="#b8b8b8"/><rect x="3" y="30.3" width="22" height="0.45" fill="#b8b8b8"/><rect x="3" y="32.6" width="30" height="0.45" fill="#b8b8b8"/><rect x="3" y="33.95" width="22" height="0.45" fill="#b8b8b8"/><rect x="3" y="38.5" width="3" height="0.45" fill="#bbb"/><rect x="20" y="39.5" width="4" height="0.45" fill="#bbb"/></svg>
<div class="r" style="left:446.01px;top:439.50px;width:15.50px;height:9.80px;background:#d3ebf7;border:1px solid #7fc3e6;border-radius:1.5px"></div>
<div class="t " style="left:393.76px;width:120px;text-align:center;top:443.00px;font-size:5.4px;color:#2f8fcf;font-weight:700;">LCK</div>
<svg class="r" style="left:472.51px;top:442.30px;" width="8" height="8" viewBox="0 0 8 8"><rect x="0" y="0" width="7.8" height="7.6" rx="0.8" fill="#2d86d8"/><text x="3.9" y="6.2" font-family="Liberation Sans" font-size="6" font-weight="bold" fill="#fff" text-anchor="middle">W</text></svg>
<svg class="r" style="left:558.44px;top:398.70px;" width="9.2" height="9.2" viewBox="0 0 9.2 9.2"><rect x="0.75" y="0.75" width="7.5" height="7.6" rx="1.1" fill="#fff" stroke="#747474" stroke-width="1.45"/></svg>
<div class="t " style="left:476.14px;width:120px;text-align:center;top:460.00px;font-size:6.5px;color:#333333;-webkit-text-stroke:0.12px #333">Flexin_501_Kunstle...</div>
<svg class="r" style="left:513.00px;top:399.00px;" width="45" height="56" viewBox="0 0 45 56"><rect x="1.29" y="1.30" width="42.3" height="53.6" rx="2.4" fill="none" stroke="#000" stroke-opacity="0.05" stroke-width="1"/><rect x="1.99" y="2.00" width="40.9" height="52.3" rx="2" fill="#fff" stroke="#e2e2e2" stroke-width="0.8"/></svg>
<svg class="r" style="left:518.09px;top:403.10px;" width="34" height="46" viewBox="0 0 34 46"><rect x="3" y="3" width="13" height="0.7" fill="#a0a0a0"/><rect x="3" y="4.5" width="4" height="0.5" fill="#b0b0b0"/><rect x="3" y="7" width="29" height="0.5" fill="#b8b8b8"/><rect x="3" y="8.2" width="4" height="0.5" fill="#b8b8b8"/><rect x="3" y="10.5" width="29" height="0.5" fill="#c0c0c0"/><rect x="3" y="11.7" width="29" height="0.5" fill="#c0c0c0"/><rect x="3" y="12.9" width="10" height="0.5" fill="#c0c0c0"/><rect x="3" y="15.5" width="3" height="0.5" fill="#bbb"/><rect x="3" y="18.5" width="3" height="0.5" fill="#bbb"/><rect x="3" y="19.7" width="4" height="0.5" fill="#bbb"/><rect x="3" y="22" width="3" height="0.5" fill="#bbb"/><rect x="3" y="24" width="1" height="0.5" fill="#bbb"/><rect x="5" y="24" width="12" height="0.5" fill="#bbb"/><rect x="6" y="25.2" width="6" height="0.5" fill="#bbb"/><rect x="20" y="39.5" width="4" height="0.5" fill="#bbb"/></svg>
<div class="r" style="left:518.69px;top:439.50px;width:15.50px;height:9.80px;background:#d3ebf7;border:1px solid #7fc3e6;border-radius:1.5px"></div>
<div class="t " style="left:466.44px;width:120px;text-align:center;top:443.00px;font-size:5.4px;color:#2f8fcf;font-weight:700;">LCK</div>
<svg class="r" style="left:545.19px;top:442.30px;" width="8" height="8" viewBox="0 0 8 8"><rect x="0" y="0" width="7.8" height="7.6" rx="0.8" fill="#2d86d8"/><text x="3.9" y="6.2" font-family="Liberation Sans" font-size="6" font-weight="bold" fill="#fff" text-anchor="middle">W</text></svg>
<svg class="r" style="left:631.12px;top:398.70px;" width="9.2" height="9.2" viewBox="0 0 9.2 9.2"><rect x="0.75" y="0.75" width="7.5" height="7.6" rx="1.1" fill="#fff" stroke="#747474" stroke-width="1.45"/></svg>
<div class="t " style="left:548.82px;width:120px;text-align:center;top:460.00px;font-size:6.5px;color:#333333;-webkit-text-stroke:0.12px #333">Test 1.xlsx</div>
<svg class="r" style="left:586.00px;top:399.00px;" width="45" height="56" viewBox="0 0 45 56"><rect x="0.97" y="1.30" width="42.3" height="53.6" rx="2.4" fill="none" stroke="#000" stroke-opacity="0.05" stroke-width="1"/><rect x="1.67" y="2.00" width="40.9" height="52.3" rx="2" fill="#fff" stroke="#e2e2e2" stroke-width="0.8"/></svg>
<div class="r" style="left:595.27px;top:405.60px;width:1.00px;height:0.60px;background:#aaa;"></div>
<div class="r" style="left:606.27px;top:410.60px;width:0.60px;height:1.50px;background:#aaa;"></div>
<div class="r" style="left:591.57px;top:427.90px;width:8.90px;height:9.70px;background:#fff;border:1px solid #8a8a8a;border-radius:1.2px"></div>
<svg class="r" style="left:592.57px;top:428.90px;" width="7" height="7.5" viewBox="0 0 7 7.5"><path d="M2.6 5.6 L1.6 6.6 Q0.4 7.2 0.2 5.8 Q0 5 1.4 3.8 M4.2 1.8 L5.2 0.8 Q6.4 0 6.7 1.5 Q6.8 2.4 5.4 3.6 M2.2 5 L4.8 2.4" fill="none" stroke="#777" stroke-width="0.8"/></svg>
<div class="r" style="left:591.37px;top:439.50px;width:15.50px;height:9.80px;background:#fdebe3;border:1px solid #f4a783;border-radius:1.5px"></div>
<div class="t " style="left:539.12px;width:120px;text-align:center;top:443.00px;font-size:5.0px;color:#e8703e;font-weight:700;">ONR</div>
<svg class="r" style="left:617.87px;top:442.30px;" width="8" height="8" viewBox="0 0 8 8"><rect x="0" y="0" width="7.8" height="7.6" rx="0.8" fill="#37a548"/><text x="3.9" y="6.1" font-family="Liberation Sans" font-size="5.8" font-weight="bold" fill="#fff" text-anchor="middle">X</text></svg>
<div class="t " style="left:868.90px;top:113.00px;font-size:7.2px;color:#404040;-webkit-text-stroke:0.2px #404040">Properties</div>
<div class="t " style="left:930.90px;top:113.00px;font-size:7.2px;color:#555;-webkit-text-stroke:0.2px #555">Settings</div>
<div class="r" style="left:916.00px;top:122.20px;width:55.50px;height:1.10px;background:#d8d8d8;"></div>
<div class="r" style="left:854.30px;top:121.90px;width:61.70px;height:1.80px;background:#f0823a;"></div>
<svg class="r" style="left:854.30px;top:135.60px;" width="8" height="6.5" viewBox="0 0 8 6.5"><path d="M0 0.6 Q0 0 0.6 0 H3 L3.7 1 H7.5 V6.4 H0 Z" fill="#7a7a7a"/></svg>
<div class="t " style="left:866.90px;top:137.00px;font-size:6.7px;color:#666;">Files</div>
<div class="t " style="right:33.80px;text-align:right;top:137.00px;font-size:6.7px;color:#f07a3a;">v. 1</div>
<svg class="r" style="left:855.30px;top:156.50px;" width="6" height="4" viewBox="0 0 6 4"><path d="M0.5 0.6 L2.8 3 L5.1 0.6" fill="none" stroke="#777" stroke-width="0.9"/></svg>
<div class="t " style="left:866.20px;top:155.00px;font-size:6.9px;color:#333;-webkit-text-stroke:0.2px #333">Main</div>
<div class="t " style="left:858.70px;top:171.00px;font-size:6.6px;color:#5a5a5a;">Type</div>
<div class="t " style="left:920.90px;top:171.00px;font-size:6.6px;color:#333;">Normal Folder</div>
<div class="t " style="left:858.70px;top:188.00px;font-size:6.6px;color:#5a5a5a;">Template name</div>
<div class="t " style="left:920.90px;top:187.00px;font-size:6.6px;color:#333;">DIA v3_1 Template</div>
<div class="t " style="left:858.70px;top:205.00px;font-size:6.6px;color:#5a5a5a;">Last update (UTC)</div>
<div class="t " style="left:920.90px;top:205.00px;font-size:6.6px;color:#333;">Peter Beckert</div>
<div class="t " style="left:920.90px;top:214.00px;font-size:6.6px;color:#333;">24-Jan-2019 08:48:48</div>
<div class="t " style="left:858.70px;top:231.00px;font-size:6.6px;color:#5a5a5a;">Milestone</div>
<svg class="r" style="left:856.60px;top:252.20px;" width="4" height="6" viewBox="0 0 4 6"><path d="M0.6 0.6 L3 2.9 L0.6 5.2" fill="none" stroke="#888" stroke-width="0.8"/></svg>
<div class="t " style="left:866.40px;top:253.00px;font-size:6.7px;color:#333;-webkit-text-stroke:0.18px #333">Metadata</div>
<div class="t " style="right:34.80px;text-align:right;top:253.00px;font-size:6.7px;color:#2b8edb;-webkit-text-stroke:0.1px #2b8edb">View &amp; Edit All</div>
<svg class="r" style="left:856.60px;top:263.80px;" width="4" height="6" viewBox="0 0 4 6"><path d="M0.6 0.6 L3 2.9 L0.6 5.2" fill="none" stroke="#888" stroke-width="0.8"/></svg>
<div class="t " style="left:866.40px;top:264.00px;font-size:6.7px;color:#333;-webkit-text-stroke:0.18px #333">Chat</div>
<svg class="r" style="left:856.60px;top:275.10px;" width="4" height="6" viewBox="0 0 4 6"><path d="M0.6 0.6 L3 2.9 L0.6 5.2" fill="none" stroke="#888" stroke-width="0.8"/></svg>
<div class="t " style="left:866.40px;top:276.00px;font-size:6.7px;color:#333;-webkit-text-stroke:0.18px #333">Queries</div>
<div class="t " style="right:34.80px;text-align:right;top:276.00px;font-size:6.7px;color:#2b8edb;-webkit-text-stroke:0.1px #2b8edb">View &amp; Edit All</div>
<svg class="r" style="left:856.60px;top:286.70px;" width="4" height="6" viewBox="0 0 4 6"><path d="M0.6 0.6 L3 2.9 L0.6 5.2" fill="none" stroke="#888" stroke-width="0.8"/></svg>
<div class="t " style="left:866.40px;top:287.00px;font-size:6.7px;color:#333;-webkit-text-stroke:0.18px #333">Comments</div>
<svg class="r" style="left:839.30px;top:295.50px;" width="4" height="6.5" viewBox="0 0 4 6.5"><path d="M0.4 0.3 L3.6 3.1 L0.4 5.9 Z" fill="#555"/></svg></body></html>
